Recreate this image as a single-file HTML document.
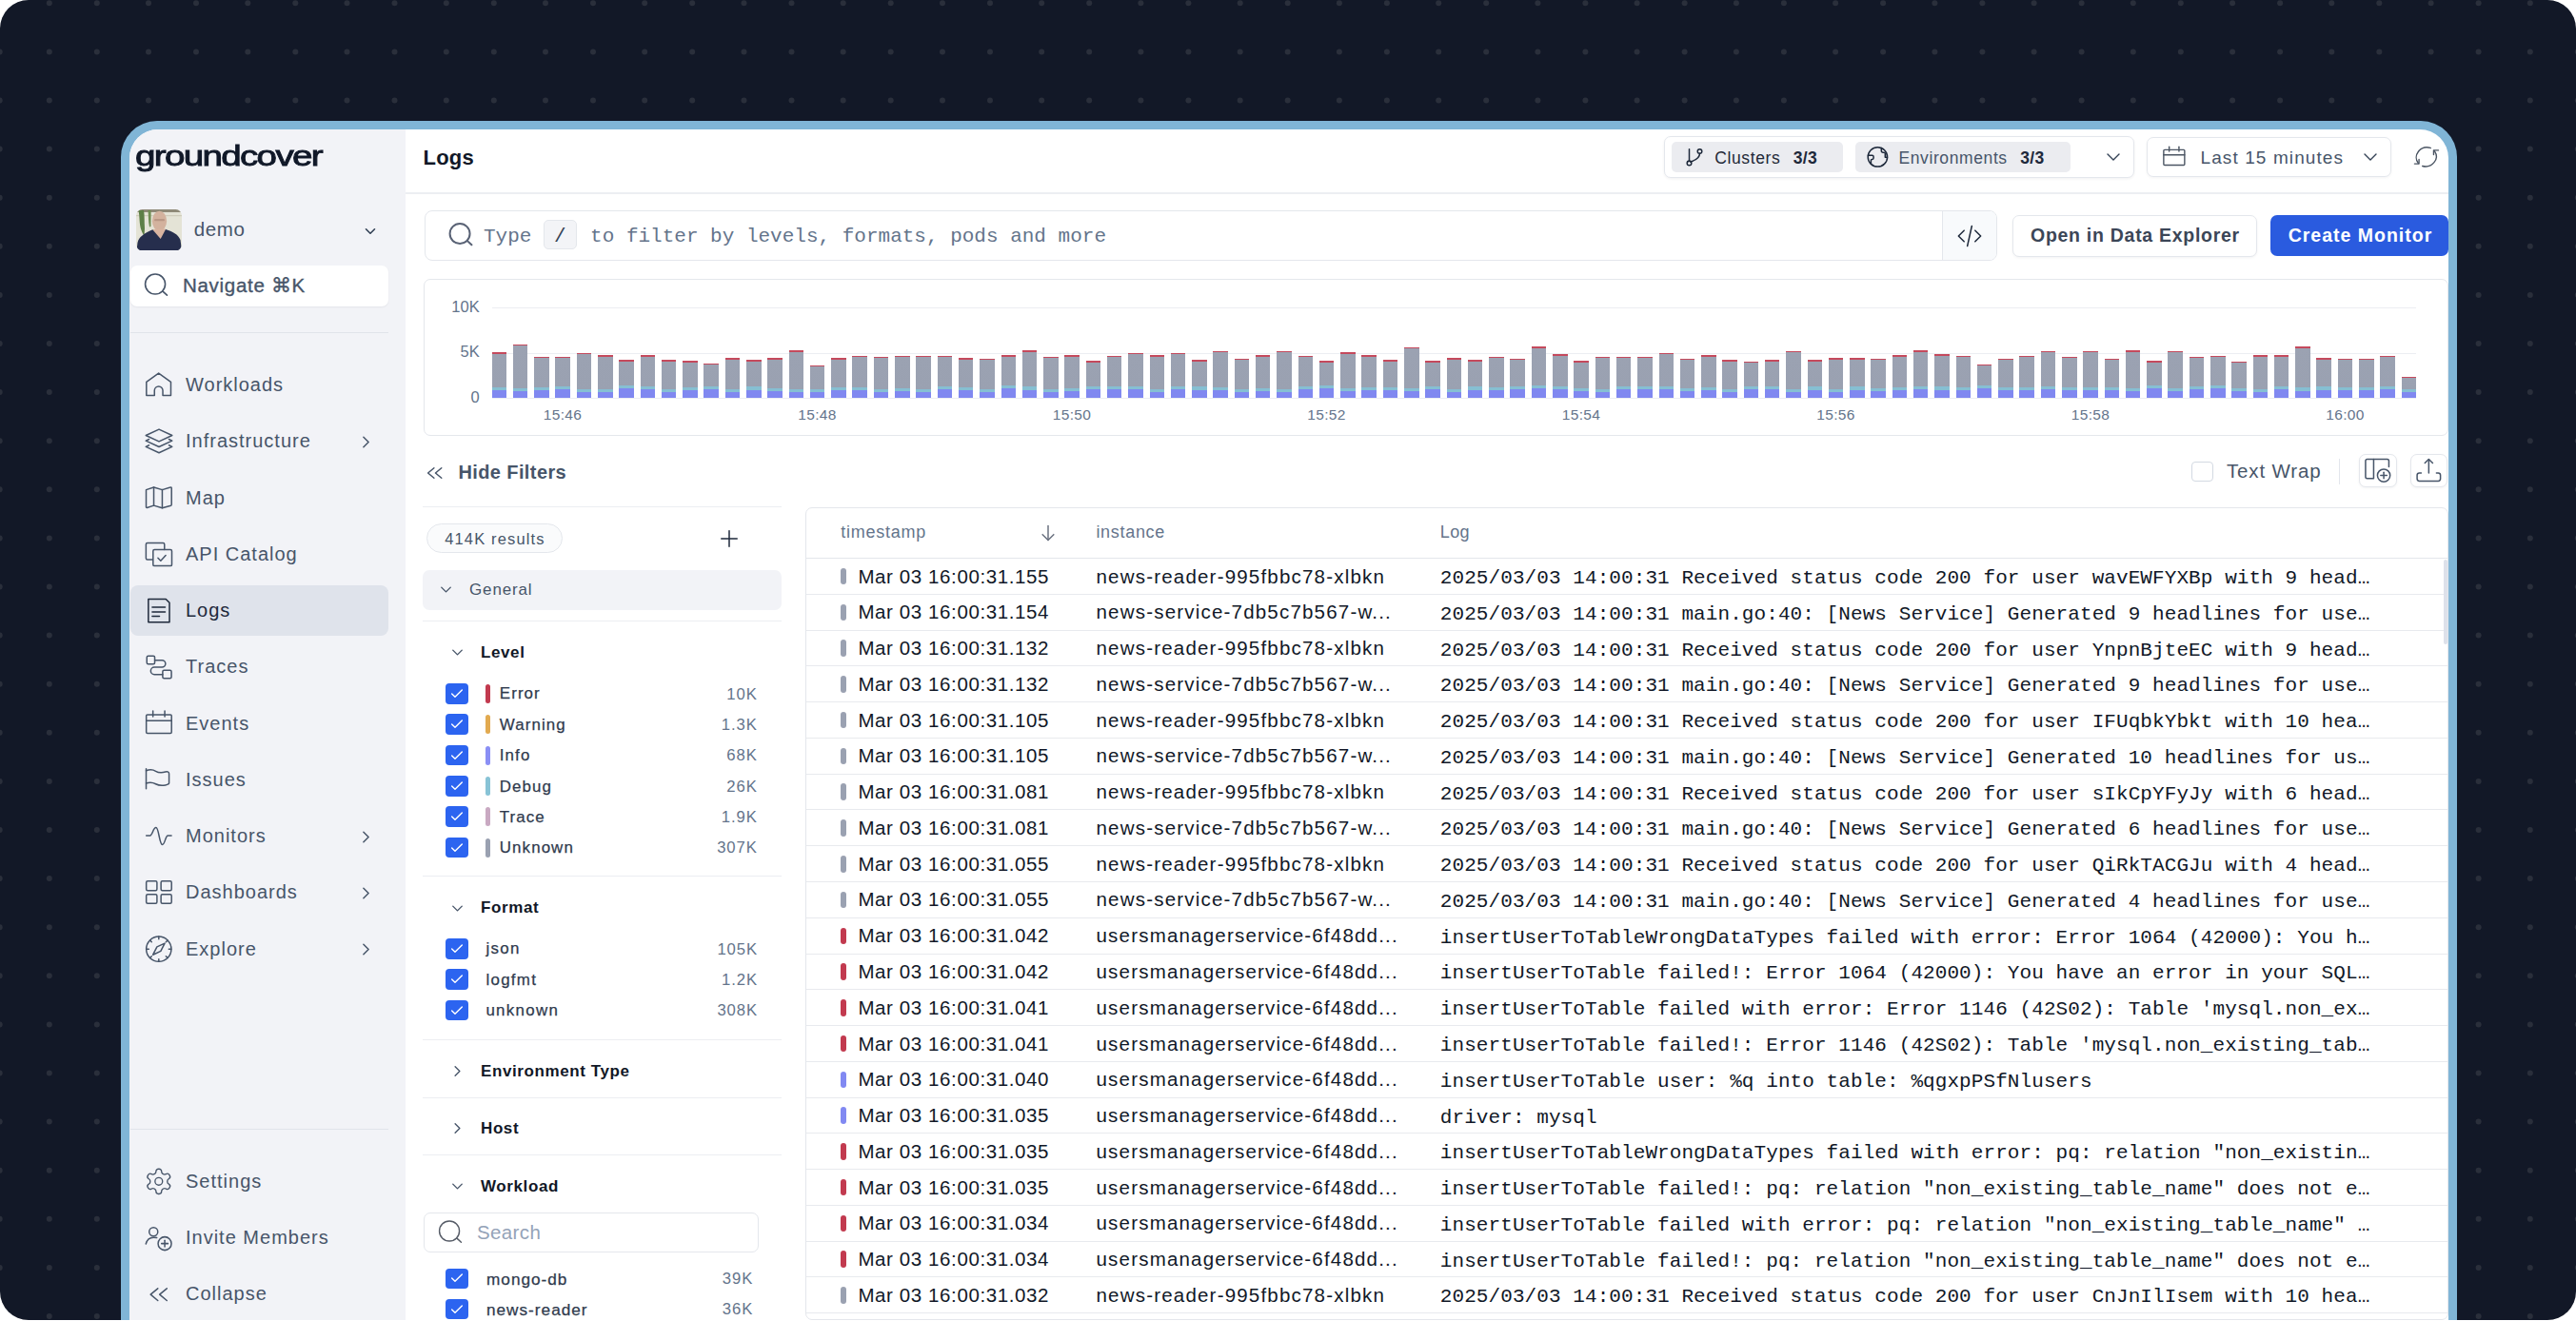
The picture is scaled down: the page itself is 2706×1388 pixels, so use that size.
<!DOCTYPE html><html><head><meta charset="utf-8"><style>
html,body{margin:0;padding:0;}
body{width:2706px;height:1388px;overflow:hidden;background:#ffffff;position:relative;font-family:"Liberation Sans",sans-serif;}
.t{position:absolute;white-space:nowrap;line-height:1;}
.r{position:absolute;box-sizing:border-box;}
.bg{position:absolute;left:0;top:0;width:2706px;height:1387px;border-radius:30px;background:#121827;overflow:hidden;}
.frame{position:absolute;left:127px;top:127px;width:2454px;height:1260px;background:#80b5d6;border-radius:38px 38px 0 0;}
.app{position:absolute;left:136px;top:136px;width:2436px;height:1251px;background:#ffffff;border-radius:30px 30px 0 0;overflow:hidden;}
.abs{position:absolute;left:-136px;top:-136px;width:2706px;height:1388px;}
</style></head><body>
<domain hidden>Computer-Use</domain>
<div class="bg">
<svg width="2706" height="1387" style="position:absolute;left:0;top:0" fill="#2a2f3b"><circle cx="-0.3" cy="3.3" r="3"/><circle cx="51.8" cy="3.3" r="3"/><circle cx="101.8" cy="3.3" r="3"/><circle cx="156.0" cy="3.3" r="3"/><circle cx="206.0" cy="3.3" r="3"/><circle cx="260.3" cy="3.3" r="3"/><circle cx="310.3" cy="3.3" r="3"/><circle cx="364.5" cy="3.3" r="3"/><circle cx="414.5" cy="3.3" r="3"/><circle cx="468.8" cy="3.3" r="3"/><circle cx="518.8" cy="3.3" r="3"/><circle cx="573.0" cy="3.3" r="3"/><circle cx="623.0" cy="3.3" r="3"/><circle cx="677.2" cy="3.3" r="3"/><circle cx="727.2" cy="3.3" r="3"/><circle cx="781.5" cy="3.3" r="3"/><circle cx="831.5" cy="3.3" r="3"/><circle cx="885.7" cy="3.3" r="3"/><circle cx="935.7" cy="3.3" r="3"/><circle cx="990.0" cy="3.3" r="3"/><circle cx="1040.0" cy="3.3" r="3"/><circle cx="1094.2" cy="3.3" r="3"/><circle cx="1144.2" cy="3.3" r="3"/><circle cx="1198.4" cy="3.3" r="3"/><circle cx="1248.4" cy="3.3" r="3"/><circle cx="1302.7" cy="3.3" r="3"/><circle cx="1352.7" cy="3.3" r="3"/><circle cx="1406.9" cy="3.3" r="3"/><circle cx="1456.9" cy="3.3" r="3"/><circle cx="1511.2" cy="3.3" r="3"/><circle cx="1561.2" cy="3.3" r="3"/><circle cx="1615.4" cy="3.3" r="3"/><circle cx="1665.4" cy="3.3" r="3"/><circle cx="1719.6" cy="3.3" r="3"/><circle cx="1769.6" cy="3.3" r="3"/><circle cx="1823.9" cy="3.3" r="3"/><circle cx="1873.9" cy="3.3" r="3"/><circle cx="1928.1" cy="3.3" r="3"/><circle cx="1978.1" cy="3.3" r="3"/><circle cx="2032.4" cy="3.3" r="3"/><circle cx="2082.4" cy="3.3" r="3"/><circle cx="2136.6" cy="3.3" r="3"/><circle cx="2186.6" cy="3.3" r="3"/><circle cx="2240.8" cy="3.3" r="3"/><circle cx="2290.8" cy="3.3" r="3"/><circle cx="2345.1" cy="3.3" r="3"/><circle cx="2395.1" cy="3.3" r="3"/><circle cx="2449.3" cy="3.3" r="3"/><circle cx="2499.3" cy="3.3" r="3"/><circle cx="2553.6" cy="3.3" r="3"/><circle cx="2603.6" cy="3.3" r="3"/><circle cx="2657.8" cy="3.3" r="3"/><circle cx="2707.8" cy="3.3" r="3"/><circle cx="-0.3" cy="54.4" r="3"/><circle cx="51.8" cy="54.4" r="3"/><circle cx="101.8" cy="54.4" r="3"/><circle cx="156.0" cy="54.4" r="3"/><circle cx="206.0" cy="54.4" r="3"/><circle cx="260.3" cy="54.4" r="3"/><circle cx="310.3" cy="54.4" r="3"/><circle cx="364.5" cy="54.4" r="3"/><circle cx="414.5" cy="54.4" r="3"/><circle cx="468.8" cy="54.4" r="3"/><circle cx="518.8" cy="54.4" r="3"/><circle cx="573.0" cy="54.4" r="3"/><circle cx="623.0" cy="54.4" r="3"/><circle cx="677.2" cy="54.4" r="3"/><circle cx="727.2" cy="54.4" r="3"/><circle cx="781.5" cy="54.4" r="3"/><circle cx="831.5" cy="54.4" r="3"/><circle cx="885.7" cy="54.4" r="3"/><circle cx="935.7" cy="54.4" r="3"/><circle cx="990.0" cy="54.4" r="3"/><circle cx="1040.0" cy="54.4" r="3"/><circle cx="1094.2" cy="54.4" r="3"/><circle cx="1144.2" cy="54.4" r="3"/><circle cx="1198.4" cy="54.4" r="3"/><circle cx="1248.4" cy="54.4" r="3"/><circle cx="1302.7" cy="54.4" r="3"/><circle cx="1352.7" cy="54.4" r="3"/><circle cx="1406.9" cy="54.4" r="3"/><circle cx="1456.9" cy="54.4" r="3"/><circle cx="1511.2" cy="54.4" r="3"/><circle cx="1561.2" cy="54.4" r="3"/><circle cx="1615.4" cy="54.4" r="3"/><circle cx="1665.4" cy="54.4" r="3"/><circle cx="1719.6" cy="54.4" r="3"/><circle cx="1769.6" cy="54.4" r="3"/><circle cx="1823.9" cy="54.4" r="3"/><circle cx="1873.9" cy="54.4" r="3"/><circle cx="1928.1" cy="54.4" r="3"/><circle cx="1978.1" cy="54.4" r="3"/><circle cx="2032.4" cy="54.4" r="3"/><circle cx="2082.4" cy="54.4" r="3"/><circle cx="2136.6" cy="54.4" r="3"/><circle cx="2186.6" cy="54.4" r="3"/><circle cx="2240.8" cy="54.4" r="3"/><circle cx="2290.8" cy="54.4" r="3"/><circle cx="2345.1" cy="54.4" r="3"/><circle cx="2395.1" cy="54.4" r="3"/><circle cx="2449.3" cy="54.4" r="3"/><circle cx="2499.3" cy="54.4" r="3"/><circle cx="2553.6" cy="54.4" r="3"/><circle cx="2603.6" cy="54.4" r="3"/><circle cx="2657.8" cy="54.4" r="3"/><circle cx="2707.8" cy="54.4" r="3"/><circle cx="-0.3" cy="105.5" r="3"/><circle cx="51.8" cy="105.5" r="3"/><circle cx="101.8" cy="105.5" r="3"/><circle cx="156.0" cy="105.5" r="3"/><circle cx="206.0" cy="105.5" r="3"/><circle cx="260.3" cy="105.5" r="3"/><circle cx="310.3" cy="105.5" r="3"/><circle cx="364.5" cy="105.5" r="3"/><circle cx="414.5" cy="105.5" r="3"/><circle cx="468.8" cy="105.5" r="3"/><circle cx="518.8" cy="105.5" r="3"/><circle cx="573.0" cy="105.5" r="3"/><circle cx="623.0" cy="105.5" r="3"/><circle cx="677.2" cy="105.5" r="3"/><circle cx="727.2" cy="105.5" r="3"/><circle cx="781.5" cy="105.5" r="3"/><circle cx="831.5" cy="105.5" r="3"/><circle cx="885.7" cy="105.5" r="3"/><circle cx="935.7" cy="105.5" r="3"/><circle cx="990.0" cy="105.5" r="3"/><circle cx="1040.0" cy="105.5" r="3"/><circle cx="1094.2" cy="105.5" r="3"/><circle cx="1144.2" cy="105.5" r="3"/><circle cx="1198.4" cy="105.5" r="3"/><circle cx="1248.4" cy="105.5" r="3"/><circle cx="1302.7" cy="105.5" r="3"/><circle cx="1352.7" cy="105.5" r="3"/><circle cx="1406.9" cy="105.5" r="3"/><circle cx="1456.9" cy="105.5" r="3"/><circle cx="1511.2" cy="105.5" r="3"/><circle cx="1561.2" cy="105.5" r="3"/><circle cx="1615.4" cy="105.5" r="3"/><circle cx="1665.4" cy="105.5" r="3"/><circle cx="1719.6" cy="105.5" r="3"/><circle cx="1769.6" cy="105.5" r="3"/><circle cx="1823.9" cy="105.5" r="3"/><circle cx="1873.9" cy="105.5" r="3"/><circle cx="1928.1" cy="105.5" r="3"/><circle cx="1978.1" cy="105.5" r="3"/><circle cx="2032.4" cy="105.5" r="3"/><circle cx="2082.4" cy="105.5" r="3"/><circle cx="2136.6" cy="105.5" r="3"/><circle cx="2186.6" cy="105.5" r="3"/><circle cx="2240.8" cy="105.5" r="3"/><circle cx="2290.8" cy="105.5" r="3"/><circle cx="2345.1" cy="105.5" r="3"/><circle cx="2395.1" cy="105.5" r="3"/><circle cx="2449.3" cy="105.5" r="3"/><circle cx="2499.3" cy="105.5" r="3"/><circle cx="2553.6" cy="105.5" r="3"/><circle cx="2603.6" cy="105.5" r="3"/><circle cx="2657.8" cy="105.5" r="3"/><circle cx="2707.8" cy="105.5" r="3"/><circle cx="-0.3" cy="156.6" r="3"/><circle cx="51.8" cy="156.6" r="3"/><circle cx="101.8" cy="156.6" r="3"/><circle cx="2603.6" cy="156.6" r="3"/><circle cx="2657.8" cy="156.6" r="3"/><circle cx="2707.8" cy="156.6" r="3"/><circle cx="-0.3" cy="207.7" r="3"/><circle cx="51.8" cy="207.7" r="3"/><circle cx="101.8" cy="207.7" r="3"/><circle cx="2603.6" cy="207.7" r="3"/><circle cx="2657.8" cy="207.7" r="3"/><circle cx="2707.8" cy="207.7" r="3"/><circle cx="-0.3" cy="258.8" r="3"/><circle cx="51.8" cy="258.8" r="3"/><circle cx="101.8" cy="258.8" r="3"/><circle cx="2603.6" cy="258.8" r="3"/><circle cx="2657.8" cy="258.8" r="3"/><circle cx="2707.8" cy="258.8" r="3"/><circle cx="-0.3" cy="309.9" r="3"/><circle cx="51.8" cy="309.9" r="3"/><circle cx="101.8" cy="309.9" r="3"/><circle cx="2603.6" cy="309.9" r="3"/><circle cx="2657.8" cy="309.9" r="3"/><circle cx="2707.8" cy="309.9" r="3"/><circle cx="-0.3" cy="361.0" r="3"/><circle cx="51.8" cy="361.0" r="3"/><circle cx="101.8" cy="361.0" r="3"/><circle cx="2603.6" cy="361.0" r="3"/><circle cx="2657.8" cy="361.0" r="3"/><circle cx="2707.8" cy="361.0" r="3"/><circle cx="-0.3" cy="412.1" r="3"/><circle cx="51.8" cy="412.1" r="3"/><circle cx="101.8" cy="412.1" r="3"/><circle cx="2603.6" cy="412.1" r="3"/><circle cx="2657.8" cy="412.1" r="3"/><circle cx="2707.8" cy="412.1" r="3"/><circle cx="-0.3" cy="463.2" r="3"/><circle cx="51.8" cy="463.2" r="3"/><circle cx="101.8" cy="463.2" r="3"/><circle cx="2603.6" cy="463.2" r="3"/><circle cx="2657.8" cy="463.2" r="3"/><circle cx="2707.8" cy="463.2" r="3"/><circle cx="-0.3" cy="514.3" r="3"/><circle cx="51.8" cy="514.3" r="3"/><circle cx="101.8" cy="514.3" r="3"/><circle cx="2603.6" cy="514.3" r="3"/><circle cx="2657.8" cy="514.3" r="3"/><circle cx="2707.8" cy="514.3" r="3"/><circle cx="-0.3" cy="565.4" r="3"/><circle cx="51.8" cy="565.4" r="3"/><circle cx="101.8" cy="565.4" r="3"/><circle cx="2603.6" cy="565.4" r="3"/><circle cx="2657.8" cy="565.4" r="3"/><circle cx="2707.8" cy="565.4" r="3"/><circle cx="-0.3" cy="616.5" r="3"/><circle cx="51.8" cy="616.5" r="3"/><circle cx="101.8" cy="616.5" r="3"/><circle cx="2603.6" cy="616.5" r="3"/><circle cx="2657.8" cy="616.5" r="3"/><circle cx="2707.8" cy="616.5" r="3"/><circle cx="-0.3" cy="667.6" r="3"/><circle cx="51.8" cy="667.6" r="3"/><circle cx="101.8" cy="667.6" r="3"/><circle cx="2603.6" cy="667.6" r="3"/><circle cx="2657.8" cy="667.6" r="3"/><circle cx="2707.8" cy="667.6" r="3"/><circle cx="-0.3" cy="718.7" r="3"/><circle cx="51.8" cy="718.7" r="3"/><circle cx="101.8" cy="718.7" r="3"/><circle cx="2603.6" cy="718.7" r="3"/><circle cx="2657.8" cy="718.7" r="3"/><circle cx="2707.8" cy="718.7" r="3"/><circle cx="-0.3" cy="769.8" r="3"/><circle cx="51.8" cy="769.8" r="3"/><circle cx="101.8" cy="769.8" r="3"/><circle cx="2603.6" cy="769.8" r="3"/><circle cx="2657.8" cy="769.8" r="3"/><circle cx="2707.8" cy="769.8" r="3"/><circle cx="-0.3" cy="820.9" r="3"/><circle cx="51.8" cy="820.9" r="3"/><circle cx="101.8" cy="820.9" r="3"/><circle cx="2603.6" cy="820.9" r="3"/><circle cx="2657.8" cy="820.9" r="3"/><circle cx="2707.8" cy="820.9" r="3"/><circle cx="-0.3" cy="872.0" r="3"/><circle cx="51.8" cy="872.0" r="3"/><circle cx="101.8" cy="872.0" r="3"/><circle cx="2603.6" cy="872.0" r="3"/><circle cx="2657.8" cy="872.0" r="3"/><circle cx="2707.8" cy="872.0" r="3"/><circle cx="-0.3" cy="923.1" r="3"/><circle cx="51.8" cy="923.1" r="3"/><circle cx="101.8" cy="923.1" r="3"/><circle cx="2603.6" cy="923.1" r="3"/><circle cx="2657.8" cy="923.1" r="3"/><circle cx="2707.8" cy="923.1" r="3"/><circle cx="-0.3" cy="974.2" r="3"/><circle cx="51.8" cy="974.2" r="3"/><circle cx="101.8" cy="974.2" r="3"/><circle cx="2603.6" cy="974.2" r="3"/><circle cx="2657.8" cy="974.2" r="3"/><circle cx="2707.8" cy="974.2" r="3"/><circle cx="-0.3" cy="1025.3" r="3"/><circle cx="51.8" cy="1025.3" r="3"/><circle cx="101.8" cy="1025.3" r="3"/><circle cx="2603.6" cy="1025.3" r="3"/><circle cx="2657.8" cy="1025.3" r="3"/><circle cx="2707.8" cy="1025.3" r="3"/><circle cx="-0.3" cy="1076.4" r="3"/><circle cx="51.8" cy="1076.4" r="3"/><circle cx="101.8" cy="1076.4" r="3"/><circle cx="2603.6" cy="1076.4" r="3"/><circle cx="2657.8" cy="1076.4" r="3"/><circle cx="2707.8" cy="1076.4" r="3"/><circle cx="-0.3" cy="1127.5" r="3"/><circle cx="51.8" cy="1127.5" r="3"/><circle cx="101.8" cy="1127.5" r="3"/><circle cx="2603.6" cy="1127.5" r="3"/><circle cx="2657.8" cy="1127.5" r="3"/><circle cx="2707.8" cy="1127.5" r="3"/><circle cx="-0.3" cy="1178.6" r="3"/><circle cx="51.8" cy="1178.6" r="3"/><circle cx="101.8" cy="1178.6" r="3"/><circle cx="2603.6" cy="1178.6" r="3"/><circle cx="2657.8" cy="1178.6" r="3"/><circle cx="2707.8" cy="1178.6" r="3"/><circle cx="-0.3" cy="1229.7" r="3"/><circle cx="51.8" cy="1229.7" r="3"/><circle cx="101.8" cy="1229.7" r="3"/><circle cx="2603.6" cy="1229.7" r="3"/><circle cx="2657.8" cy="1229.7" r="3"/><circle cx="2707.8" cy="1229.7" r="3"/><circle cx="-0.3" cy="1280.8" r="3"/><circle cx="51.8" cy="1280.8" r="3"/><circle cx="101.8" cy="1280.8" r="3"/><circle cx="2603.6" cy="1280.8" r="3"/><circle cx="2657.8" cy="1280.8" r="3"/><circle cx="2707.8" cy="1280.8" r="3"/><circle cx="-0.3" cy="1331.9" r="3"/><circle cx="51.8" cy="1331.9" r="3"/><circle cx="101.8" cy="1331.9" r="3"/><circle cx="2603.6" cy="1331.9" r="3"/><circle cx="2657.8" cy="1331.9" r="3"/><circle cx="2707.8" cy="1331.9" r="3"/><circle cx="-0.3" cy="1383.0" r="3"/><circle cx="51.8" cy="1383.0" r="3"/><circle cx="101.8" cy="1383.0" r="3"/><circle cx="2603.6" cy="1383.0" r="3"/><circle cx="2657.8" cy="1383.0" r="3"/><circle cx="2707.8" cy="1383.0" r="3"/></svg>
</div>
<div class="frame"></div>
<div class="app"><div class="abs">
<div class="r" style="left:136.0px;top:136.0px;width:290.0px;height:1252.0px;background:#f2f3f7;"></div>
<div class="t" style="left:141.5px;top:148.5px;font-size:30px;color:#101828;font-weight:normal;font-family:'Liberation Sans', sans-serif;letter-spacing:-1.3px;transform:scaleX(1.285);transform-origin:0 0;-webkit-text-stroke:0.9px #101828;">groundcover</div>
<svg class="r" style="left:143px;top:219.5px;" width="48" height="43.5" viewBox="0 0 48 43.5">
<defs><clipPath id="avc"><rect x="0" y="0" width="48" height="43.5" rx="6.5"/></clipPath><filter id="avb"><feGaussianBlur stdDeviation="0.7"/></filter></defs>
<g clip-path="url(#avc)"><rect width="48" height="43.5" fill="#e4e3d6"/>
<g filter="url(#avb)">
<rect x="0" y="0" width="48" height="3" fill="#8f8a78"/>
<rect x="0" y="6" width="48" height="1.2" fill="#cfccbb"/>
<path d="M2.5 1 C4 8 3 15 5.5 22 C6.5 25 8 27 8.5 28 L9 20 C8.5 12 9 6 8 1 Z" fill="#5d7f46"/>
<path d="M12.5 1 C13 7 12.8 13 14 18.5 L15.5 18 C15.5 11 15.8 6 15.5 1 Z" fill="#6f8e55"/>
<ellipse cx="24.5" cy="12.3" rx="7.6" ry="10.6" fill="#d3b29e"/><rect x="19" y="10" width="11" height="2.2" rx="1" fill="#a88675" opacity="0.6"/>
<path d="M17 21 L25.7 32.5 L31.5 20.5 Z" fill="#d8b3a0"/>
<path d="M0.5 43.5 L1.5 35 C3 29 8 25.5 17.3 21.3 L25.7 31 L31 20.9 C39 23.5 44.5 26.5 46.5 32 L48 43.5 Z" fill="#262f4d"/>
</g></g></svg>
<div class="t" style="left:203.8px;top:230.9px;font-size:20.5px;color:#475569;font-weight:normal;font-family:'Liberation Sans', sans-serif;letter-spacing:0.6px;">demo</div>
<svg class="r" style="left:379.7px;top:233.8px;" width="18" height="18" viewBox="0 0 24 24" fill="none" stroke="#334155" stroke-width="2.13" stroke-linecap="round" stroke-linejoin="round"><path d="m6 9 6 6 6-6"/></svg>
<div class="r" style="left:137.0px;top:279.0px;width:271.3px;height:43.0px;background:#ffffff;border-radius:7px;box-shadow:0 1px 2px rgba(16,24,40,0.06);"></div>
<svg class="r" style="left:150.1px;top:284.8px;" width="28" height="28" viewBox="0 0 24 24" fill="none" stroke="#475569" stroke-width="1.37" stroke-linecap="round" stroke-linejoin="round"><circle cx="11.2" cy="11.6" r="9"/><path d="m18 18.1 3.8 3.5"/></svg>
<div class="t" style="left:192.0px;top:290.1px;font-size:20.5px;color:#475569;font-weight:normal;font-family:'Liberation Sans', sans-serif;letter-spacing:0.7px;-webkit-text-stroke:0.35px #475569;">Navigate &#8984;K</div>
<div class="r" style="left:137.0px;top:349.0px;width:270.7px;height:1.3px;background:#e1e4ea;"></div>
<svg class="r" style="left:149.0px;top:386.7px;" width="35" height="35" viewBox="0 0 24 24" fill="none" stroke="#475569" stroke-width="1.03" stroke-linecap="round" stroke-linejoin="round"><path d="M3.3 19.6V9.8L12.1 3.5l8.8 6.3v9.8H15.1V16a3 3 0 0 0-6 0v3.6z"/></svg>
<div class="t" style="left:195.0px;top:394.0px;font-size:20px;color:#475569;font-weight:normal;font-family:'Liberation Sans', sans-serif;letter-spacing:1.0px;">Workloads</div>
<svg class="r" style="left:149.0px;top:446.0px;" width="35" height="35" viewBox="0 0 24 24" fill="none" stroke="#475569" stroke-width="1.03" stroke-linecap="round" stroke-linejoin="round"><path d="M12.35 3.5 21.8 7.9 12.35 12.3 2.9 7.9z"/><path d="M5.2 10.6 2.9 11.7l9.45 4.4 9.45-4.4-2.3-1.1"/><path d="M5.2 14.9 2.9 16l9.45 4.4L21.8 16l-2.3-1.1"/></svg>
<div class="t" style="left:195.0px;top:453.3px;font-size:20px;color:#475569;font-weight:normal;font-family:'Liberation Sans', sans-serif;letter-spacing:1.0px;">Infrastructure</div>
<svg class="r" style="left:373.5px;top:453.8px;" width="21" height="21" viewBox="0 0 24 24" fill="none" stroke="#475569" stroke-width="1.71" stroke-linecap="round" stroke-linejoin="round"><path d="m9 18 6-6-6-6"/></svg>
<svg class="r" style="left:149.0px;top:505.2px;" width="35" height="35" viewBox="0 0 24 24" fill="none" stroke="#475569" stroke-width="1.03" stroke-linecap="round" stroke-linejoin="round"><path d="M3.1 6.6 8.6 4.8l6.1 1.8 5.9-1.8a.6.6 0 0 1 .8.6V17.3a.8.8 0 0 1-.5.7L14.7 19.7 8.6 17.9 3.7 19.5a.5.5 0 0 1-.6-.5z"/><path d="M8.6 4.8v13.1"/><path d="M14.7 6.6v13.1"/></svg>
<div class="t" style="left:195.0px;top:512.5px;font-size:20px;color:#475569;font-weight:normal;font-family:'Liberation Sans', sans-serif;letter-spacing:1.0px;">Map</div>
<svg class="r" style="left:149.0px;top:564.5px;" width="35" height="35" viewBox="0 0 24 24" fill="none" stroke="#475569" stroke-width="1.03" stroke-linecap="round" stroke-linejoin="round"><path d="M7.8 15.8H4a1 1 0 0 1-1-1V4.8a1 1 0 0 1 1-1h11.3a1 1 0 0 1 1 1v3.8"/><rect x="8.1" y="8.6" width="13.5" height="11.7" rx="1"/><path d="m11.6 14.6 2 2 3.6-3.9"/></svg>
<div class="t" style="left:195.0px;top:571.8px;font-size:20px;color:#475569;font-weight:normal;font-family:'Liberation Sans', sans-serif;letter-spacing:1.0px;">API Catalog</div>
<div class="r" style="left:136.8px;top:614.8px;width:270.9px;height:53.2px;background:#dfe3eb;border-radius:8px;"></div>
<svg class="r" style="left:149.0px;top:623.8px;" width="35" height="35" viewBox="0 0 24 24" fill="none" stroke="#1e293b" stroke-width="1.03" stroke-linecap="round" stroke-linejoin="round"><path d="M4.7 3.8h12.6l2.6 2.6v14H4.7z"/><path d="M7.5 9.6h9.3"/><path d="M7.5 13h9.3"/><path d="M7.5 16.1h5.2"/></svg>
<div class="t" style="left:195.0px;top:631.1px;font-size:20px;color:#1e293b;font-weight:normal;font-family:'Liberation Sans', sans-serif;letter-spacing:1.0px;">Logs</div>
<svg class="r" style="left:149.0px;top:683.1px;" width="35" height="35" viewBox="0 0 24 24" fill="none" stroke="#475569" stroke-width="1.03" stroke-linecap="round" stroke-linejoin="round"><rect x="3.6" y="4.3" width="5.7" height="5.8" rx="1"/><rect x="15" y="14.6" width="6.3" height="5.8" rx="1"/><path d="M9.3 7.3h5.2a2.55 2.55 0 0 1 0 5.1H9a2.6 2.6 0 0 0 0 5.2h6"/></svg>
<div class="t" style="left:195.0px;top:690.4px;font-size:20px;color:#475569;font-weight:normal;font-family:'Liberation Sans', sans-serif;letter-spacing:1.0px;">Traces</div>
<svg class="r" style="left:149.0px;top:742.3px;" width="35" height="35" viewBox="0 0 24 24" fill="none" stroke="#475569" stroke-width="1.03" stroke-linecap="round" stroke-linejoin="round"><rect x="3.2" y="6.1" width="18.2" height="13.4" rx="0.8"/><path d="M3.2 10.5h18.2"/><path d="M8 3.5v4"/><path d="M16.5 3.5v4"/></svg>
<div class="t" style="left:195.0px;top:749.6px;font-size:20px;color:#475569;font-weight:normal;font-family:'Liberation Sans', sans-serif;letter-spacing:1.0px;">Events</div>
<svg class="r" style="left:149.0px;top:801.6px;" width="35" height="35" viewBox="0 0 24 24" fill="none" stroke="#475569" stroke-width="1.03" stroke-linecap="round" stroke-linejoin="round"><path d="M3.1 18.3V4"/><path d="M3.1 5.3C6 4.3 8 4.5 10 5.7s4 1.3 7 .5q2.6-.6 2.6 1.3v6.8q0 .9-2.6 1.4c-3 .6-5 .3-7-.8s-4-1.5-6.9-.5"/></svg>
<div class="t" style="left:195.0px;top:808.9px;font-size:20px;color:#475569;font-weight:normal;font-family:'Liberation Sans', sans-serif;letter-spacing:1.0px;">Issues</div>
<svg class="r" style="left:149.0px;top:860.9px;" width="35" height="35" viewBox="0 0 24 24" fill="none" stroke="#475569" stroke-width="1.03" stroke-linecap="round" stroke-linejoin="round"><path d="M3.2 11.6H6c1.5 0 2.2-5.7 4.2-5.7s2.5 12.2 4.5 12.2 2.3-6.5 4-6.5h2.6"/></svg>
<div class="t" style="left:195.0px;top:868.2px;font-size:20px;color:#475569;font-weight:normal;font-family:'Liberation Sans', sans-serif;letter-spacing:1.0px;">Monitors</div>
<svg class="r" style="left:373.5px;top:868.7px;" width="21" height="21" viewBox="0 0 24 24" fill="none" stroke="#475569" stroke-width="1.71" stroke-linecap="round" stroke-linejoin="round"><path d="m9 18 6-6-6-6"/></svg>
<svg class="r" style="left:149.0px;top:920.1px;" width="35" height="35" viewBox="0 0 24 24" fill="none" stroke="#475569" stroke-width="1.03" stroke-linecap="round" stroke-linejoin="round"><rect x="3.2" y="3.9" width="7.7" height="6.9" rx="1"/><rect x="13.8" y="3.9" width="7.6" height="6.9" rx="1"/><rect x="3.2" y="13.5" width="7.7" height="6.6" rx="1"/><rect x="13.8" y="13.5" width="7.6" height="6.6" rx="1"/></svg>
<div class="t" style="left:195.0px;top:927.4px;font-size:20px;color:#475569;font-weight:normal;font-family:'Liberation Sans', sans-serif;letter-spacing:1.0px;">Dashboards</div>
<svg class="r" style="left:373.5px;top:927.9px;" width="21" height="21" viewBox="0 0 24 24" fill="none" stroke="#475569" stroke-width="1.71" stroke-linecap="round" stroke-linejoin="round"><path d="m9 18 6-6-6-6"/></svg>
<svg class="r" style="left:149.0px;top:979.4px;" width="35" height="35" viewBox="0 0 24 24" fill="none" stroke="#475569" stroke-width="1.03" stroke-linecap="round" stroke-linejoin="round"><circle cx="12.2" cy="12.5" r="9"/><path d="M12.2 3.5v1.8"/><path d="M12.2 19.7v1.8"/><path d="M3.2 12.5H5"/><path d="M19.4 12.5h1.8"/><path d="m18.56 6.14-1.2 1.2"/><path d="m5.84 6.14 1.2 1.2"/><path d="m5.84 18.86 1.2-1.2"/><path d="m18.56 18.86-1.2-1.2"/><path d="M16.5 8.3 13.6 14 8 16.6l2.9-5.7z"/></svg>
<div class="t" style="left:195.0px;top:986.7px;font-size:20px;color:#475569;font-weight:normal;font-family:'Liberation Sans', sans-serif;letter-spacing:1.0px;">Explore</div>
<svg class="r" style="left:373.5px;top:987.2px;" width="21" height="21" viewBox="0 0 24 24" fill="none" stroke="#475569" stroke-width="1.71" stroke-linecap="round" stroke-linejoin="round"><path d="m9 18 6-6-6-6"/></svg>
<div class="r" style="left:137.0px;top:1186.0px;width:270.5px;height:1.3px;background:#e1e4ea;"></div>
<svg class="r" style="left:149.0px;top:1223.9px;" width="35" height="35" viewBox="0 0 24 24" fill="none" stroke="#475569" stroke-width="1.03" stroke-linecap="round" stroke-linejoin="round"><g transform="translate(12.2 11.9) scale(0.9) translate(-12 -12)"><path d="M12.22 2h-.44a2 2 0 0 0-2 2v.18a2 2 0 0 1-1 1.73l-.43.25a2 2 0 0 1-2 0l-.15-.08a2 2 0 0 0-2.73.73l-.22.38a2 2 0 0 0 .73 2.73l.15.1a2 2 0 0 1 1 1.72v.51a2 2 0 0 1-1 1.74l-.15.09a2 2 0 0 0-.73 2.73l.22.38a2 2 0 0 0 2.73.73l.15-.08a2 2 0 0 1 2 0l.43.25a2 2 0 0 1 1 1.73V20a2 2 0 0 0 2 2h.44a2 2 0 0 0 2-2v-.18a2 2 0 0 1 1-1.73l.43-.25a2 2 0 0 1 2 0l.15.08a2 2 0 0 0 2.73-.73l.22-.39a2 2 0 0 0-.73-2.73l-.15-.08a2 2 0 0 1-1-1.74v-.5a2 2 0 0 1 1-1.74l.15-.09a2 2 0 0 0 .73-2.73l-.22-.38a2 2 0 0 0-2.73-.73l-.15.08a2 2 0 0 1-2 0l-.43-.25a2 2 0 0 1-1-1.73V4a2 2 0 0 0-2-2z"/><circle cx="12" cy="12" r="3"/></g></svg>
<div class="t" style="left:195.0px;top:1231.2px;font-size:20px;color:#475569;font-weight:normal;font-family:'Liberation Sans', sans-serif;letter-spacing:1.0px;">Settings</div>
<svg class="r" style="left:149.0px;top:1282.7px;" width="35" height="35" viewBox="0 0 24 24" fill="none" stroke="#475569" stroke-width="1.03" stroke-linecap="round" stroke-linejoin="round"><circle cx="8.4" cy="7.75" r="3.1"/><path d="M2.9 16.5c.8-3 3-4.7 5.5-4.7 1 0 1.7.1 2.4.2"/><circle cx="16.5" cy="16.2" r="4.8"/><path d="M16.5 13.9v4.6"/><path d="M14.2 16.2h4.6"/></svg>
<div class="t" style="left:195.0px;top:1290.0px;font-size:20px;color:#475569;font-weight:normal;font-family:'Liberation Sans', sans-serif;letter-spacing:1.0px;">Invite Members</div>
<svg class="r" style="left:149.0px;top:1341.6px;" width="35" height="35" viewBox="0 0 24 24" fill="none" stroke="#475569" stroke-width="1.03" stroke-linecap="round" stroke-linejoin="round"><path d="m11.5 8.1-5.2 4.35 5.2 4.35"/><path d="m18 8.1-5.2 4.35L18 16.8"/></svg>
<div class="t" style="left:195.0px;top:1348.9px;font-size:20px;color:#475569;font-weight:normal;font-family:'Liberation Sans', sans-serif;letter-spacing:1.0px;">Collapse</div>
<div class="t" style="left:444.5px;top:155.0px;font-size:22px;color:#111827;font-weight:bold;font-family:'Liberation Sans', sans-serif;letter-spacing:0.2px;">Logs</div>
<div class="r" style="left:426.0px;top:202.0px;width:2146.0px;height:2.0px;background:#eceef2;"></div>
<div class="r" style="left:1748.4px;top:142.6px;width:493.5px;height:44.7px;border:1px solid #e4e7ec;border-radius:7px;background:#fff;box-shadow:0 1px 3px rgba(16,24,40,0.06);"></div>
<div class="r" style="left:1755.8px;top:149.0px;width:180.4px;height:31.9px;background:#ebecf0;border-radius:5px;"></div>
<div class="r" style="left:1948.8px;top:149.0px;width:226.2px;height:31.9px;background:#ebecf0;border-radius:5px;"></div>
<svg class="r" style="left:1768.8px;top:154.0px;" width="22" height="22" viewBox="0 0 24 24" fill="none" stroke="#1e293b" stroke-width="1.64" stroke-linecap="round" stroke-linejoin="round"><circle cx="6" cy="19" r="2.5"/><circle cx="18" cy="5.5" r="2.5"/><path d="M6 3v13.5"/><path d="M18 8c0 5-4 7.5-10.5 9.5"/></svg>
<div class="t" style="left:1801.3px;top:157.5px;font-size:17.5px;color:#1f2937;font-weight:normal;font-family:'Liberation Sans', sans-serif;letter-spacing:0.6px;">Clusters</div>
<div class="t" style="left:1883.8px;top:157.5px;font-size:17.5px;color:#1e293b;font-weight:bold;font-family:'Liberation Sans', sans-serif;letter-spacing:0.3px;">3/3</div>
<svg class="r" style="left:1960.2px;top:153.0px;" width="24" height="24" viewBox="0 0 24 24" fill="none" stroke="#1e293b" stroke-width="1.50" stroke-linecap="round" stroke-linejoin="round"><circle cx="12.4" cy="11.9" r="10.2"/><path d="M2.4 10.3h4.3a1.4 1.4 0 0 1 1.4 1.4v1.4a1.4 1.4 0 0 1-1.4 1.4h-.3a1 1 0 0 0-1 1v3.6"/><path d="M16.3 2.6v2.6a2 2 0 0 0 2 2h.8a1.2 1.2 0 0 1 1.2 1.2v3.9h2.2"/></svg>
<div class="t" style="left:1994.5px;top:157.5px;font-size:17.5px;color:#475569;font-weight:normal;font-family:'Liberation Sans', sans-serif;letter-spacing:0.6px;">Environments</div>
<div class="t" style="left:2122.2px;top:157.5px;font-size:17.5px;color:#1e293b;font-weight:bold;font-family:'Liberation Sans', sans-serif;letter-spacing:0.3px;">3/3</div>
<svg class="r" style="left:2208.0px;top:153.0px;" width="24" height="24" viewBox="0 0 24 24" fill="none" stroke="#334155" stroke-width="1.40" stroke-linecap="round" stroke-linejoin="round"><path d="m6 9 6 6 6-6"/></svg>
<div class="r" style="left:2255.4px;top:144.3px;width:256.2px;height:41.6px;border:1px solid #e4e7ec;border-radius:7px;background:#fff;box-shadow:0 1px 3px rgba(16,24,40,0.05);"></div>
<svg class="r" style="left:2268.8px;top:150.1px;" width="29" height="29" viewBox="0 0 24 24" fill="none" stroke="#4b5563" stroke-width="1.16" stroke-linecap="round" stroke-linejoin="round"><rect x="3.2" y="6.1" width="18.2" height="13.4" rx="0.8"/><path d="M3.2 10.5h18.2"/><path d="M8 3.5v4"/><path d="M16.5 3.5v4"/></svg>
<div class="t" style="left:2311.5px;top:155.8px;font-size:19px;color:#475569;font-weight:normal;font-family:'Liberation Sans', sans-serif;letter-spacing:1.1px;">Last 15 minutes</div>
<svg class="r" style="left:2477.6px;top:153.4px;" width="24" height="24" viewBox="0 0 24 24" fill="none" stroke="#334155" stroke-width="1.40" stroke-linecap="round" stroke-linejoin="round"><path d="m6 9 6 6 6-6"/></svg>
<svg class="r" style="left:2534.8px;top:150.9px;" width="28" height="28" viewBox="0 0 24 24" fill="none" stroke="#4b5563" stroke-width="1.20" stroke-linecap="round" stroke-linejoin="round"><path d="M15.6 3.8A9.8 9 0 0 0 4.6 17.6"/><path d="M5.2 14.2v3.9H1.2"/><path d="M8.3 20.1A9.8 9 0 0 0 19.3 6.7"/><path d="M18.4 9.8V5.9h4.3"/></svg>
<div class="r" style="left:446.0px;top:221.3px;width:1652.3px;height:52.9px;border:1px solid #e4e7ec;border-radius:8px;background:#fff;"></div>
<div class="r" style="left:2039.7px;top:222.3px;width:57.6px;height:50.9px;background:#f8fafc;border-left:1px solid #e4e7ec;border-radius:0 7px 7px 0;"></div>
<svg class="r" style="left:2054.8px;top:233.9px;" width="28" height="28" viewBox="0 0 24 24" fill="none" stroke="#1e293b" stroke-width="1.29" stroke-linecap="round" stroke-linejoin="round"><path d="m7 7-5 5 5 5"/><path d="m17 7 5 5-5 5"/><path d="m14 3-4 18"/></svg>
<svg class="r" style="left:469.5px;top:232.2px;" width="28" height="28" viewBox="0 0 24 24" fill="none" stroke="#596275" stroke-width="1.71" stroke-linecap="round" stroke-linejoin="round"><circle cx="11.2" cy="11.6" r="9"/><path d="m18 18.1 3.8 3.5"/></svg>
<div class="t" style="left:508.0px;top:237.9px;font-size:21px;color:#64748b;font-weight:normal;font-family:'Liberation Mono', monospace;">Type</div>
<div class="r" style="left:571.2px;top:230.6px;width:34.9px;height:31.4px;background:#f3f4f7;border:1px solid #e4e7ec;border-radius:5px;"></div>
<div class="t" style="left:582.0px;top:237.9px;font-size:21px;color:#334155;font-weight:normal;font-family:'Liberation Mono', monospace;">/</div>
<div class="t" style="left:620.1px;top:237.9px;font-size:21px;color:#64748b;font-weight:normal;font-family:'Liberation Mono', monospace;">to filter by levels, formats, pods and more</div>
<div class="r" style="left:2113.5px;top:225.5px;width:257.8px;height:44.7px;border:1px solid #e4e7ec;border-radius:7px;background:#fff;box-shadow:0 1px 3px rgba(16,24,40,0.05);"></div>
<div class="t" style="left:2133.0px;top:238.1px;font-size:19.5px;color:#3b4657;font-weight:bold;font-family:'Liberation Sans', sans-serif;letter-spacing:0.72px;">Open in Data Explorer</div>
<div class="r" style="left:2384.8px;top:226.3px;width:187.2px;height:43.0px;background:#2a5bdf;border-radius:7px;"></div>
<div class="t" style="left:2403.7px;top:238.1px;font-size:19.5px;color:#ffffff;font-weight:bold;font-family:'Liberation Sans', sans-serif;letter-spacing:1.0px;">Create Monitor</div>
<div class="r" style="left:444.6px;top:293.0px;width:2127.1px;height:165.1px;border:1px solid #e4e7ec;border-radius:7px;background:#fff;"></div>
<div class="t" style="right:2202.3px;top:314.0px;font-size:16.5px;color:#64748b;font-weight:normal;font-family:'Liberation Sans', sans-serif;">10K</div>
<div class="t" style="right:2202.3px;top:361.3px;font-size:16.5px;color:#64748b;font-weight:normal;font-family:'Liberation Sans', sans-serif;">5K</div>
<div class="t" style="right:2202.3px;top:408.7px;font-size:16.5px;color:#64748b;font-weight:normal;font-family:'Liberation Sans', sans-serif;">0</div>
<div class="r" style="left:516.5px;top:323.2px;width:2021.8px;height:1.2px;background:#eceef2;"></div>
<div class="r" style="left:516.5px;top:370.7px;width:2021.8px;height:1.2px;background:#eceef2;"></div>
<div class="r" style="left:516.5px;top:418.1px;width:2021.8px;height:1.2px;background:#eceef2;"></div>
<div class="r" style="left:516.5px;top:370.1px;width:15.5px;height:48.0px;background:linear-gradient(to top,#8088f0 0,#8088f0 7.5px,#86bfd3 7.5px,#86bfd3 10.7px,#9aa1b1 10.7px,#9ba2b2 calc(100% - 1.5px),#c54a5d calc(100% - 1.5px));"></div><div class="r" style="left:538.8px;top:361.9px;width:15.5px;height:56.2px;background:linear-gradient(to top,#8088f0 0,#8088f0 7px,#86bfd3 7px,#86bfd3 10.2px,#9aa1b1 10.2px,#9ba2b2 calc(100% - 1.5px),#c54a5d calc(100% - 1.5px));"></div><div class="r" style="left:561.1px;top:374.9px;width:15.5px;height:43.2px;background:linear-gradient(to top,#8088f0 0,#8088f0 8px,#86bfd3 8px,#86bfd3 11.2px,#9aa1b1 11.2px,#9ba2b2 calc(100% - 1.5px),#c54a5d calc(100% - 1.5px));"></div><div class="r" style="left:583.4px;top:375.3px;width:15.5px;height:42.8px;background:linear-gradient(to top,#8088f0 0,#8088f0 9px,#86bfd3 9px,#86bfd3 12.2px,#9aa1b1 12.2px,#9ba2b2 calc(100% - 1.5px),#c54a5d calc(100% - 1.5px));"></div><div class="r" style="left:605.7px;top:370.7px;width:15.5px;height:47.4px;background:linear-gradient(to top,#8088f0 0,#8088f0 6px,#86bfd3 6px,#86bfd3 9.2px,#9aa1b1 9.2px,#9ba2b2 calc(100% - 1.5px),#c54a5d calc(100% - 1.5px));"></div><div class="r" style="left:628.0px;top:373.4px;width:15.5px;height:44.7px;background:linear-gradient(to top,#8088f0 0,#8088f0 6px,#86bfd3 6px,#86bfd3 9.2px,#9aa1b1 9.2px,#9ba2b2 calc(100% - 1.5px),#c54a5d calc(100% - 1.5px));"></div><div class="r" style="left:650.2px;top:377.8px;width:15.5px;height:40.3px;background:linear-gradient(to top,#8088f0 0,#8088f0 10px,#86bfd3 10px,#86bfd3 13.2px,#9aa1b1 13.2px,#9ba2b2 calc(100% - 1.5px),#c54a5d calc(100% - 1.5px));"></div><div class="r" style="left:672.5px;top:373.0px;width:15.5px;height:45.1px;background:linear-gradient(to top,#8088f0 0,#8088f0 8.5px,#86bfd3 8.5px,#86bfd3 11.7px,#9aa1b1 11.7px,#9ba2b2 calc(100% - 1.5px),#c54a5d calc(100% - 1.5px));"></div><div class="r" style="left:694.8px;top:377.8px;width:15.5px;height:40.3px;background:linear-gradient(to top,#8088f0 0,#8088f0 6px,#86bfd3 6px,#86bfd3 9.2px,#9aa1b1 9.2px,#9ba2b2 calc(100% - 1.5px),#c54a5d calc(100% - 1.5px));"></div><div class="r" style="left:717.1px;top:378.8px;width:15.5px;height:39.3px;background:linear-gradient(to top,#8088f0 0,#8088f0 7.5px,#86bfd3 7.5px,#86bfd3 10.7px,#9aa1b1 10.7px,#9ba2b2 calc(100% - 1.5px),#c54a5d calc(100% - 1.5px));"></div><div class="r" style="left:739.4px;top:381.7px;width:15.5px;height:36.4px;background:linear-gradient(to top,#8088f0 0,#8088f0 8.5px,#86bfd3 8.5px,#86bfd3 11.7px,#9aa1b1 11.7px,#9ba2b2 calc(100% - 1.5px),#c54a5d calc(100% - 1.5px));"></div><div class="r" style="left:761.7px;top:375.9px;width:15.5px;height:42.2px;background:linear-gradient(to top,#8088f0 0,#8088f0 6px,#86bfd3 6px,#86bfd3 9.2px,#9aa1b1 9.2px,#9ba2b2 calc(100% - 1.5px),#c54a5d calc(100% - 1.5px));"></div><div class="r" style="left:784.0px;top:378.4px;width:15.5px;height:39.7px;background:linear-gradient(to top,#8088f0 0,#8088f0 8.5px,#86bfd3 8.5px,#86bfd3 11.7px,#9aa1b1 11.7px,#9ba2b2 calc(100% - 1.5px),#c54a5d calc(100% - 1.5px));"></div><div class="r" style="left:806.3px;top:375.5px;width:15.5px;height:42.6px;background:linear-gradient(to top,#8088f0 0,#8088f0 7px,#86bfd3 7px,#86bfd3 10.2px,#9aa1b1 10.2px,#9ba2b2 calc(100% - 1.5px),#c54a5d calc(100% - 1.5px));"></div><div class="r" style="left:828.6px;top:367.8px;width:15.5px;height:50.3px;background:linear-gradient(to top,#8088f0 0,#8088f0 6px,#86bfd3 6px,#86bfd3 9.2px,#9aa1b1 9.2px,#9ba2b2 calc(100% - 1.5px),#c54a5d calc(100% - 1.5px));"></div><div class="r" style="left:850.8px;top:383.7px;width:15.5px;height:34.4px;background:linear-gradient(to top,#8088f0 0,#8088f0 6px,#86bfd3 6px,#86bfd3 9.2px,#9aa1b1 9.2px,#9ba2b2 calc(100% - 1.5px),#c54a5d calc(100% - 1.5px));"></div><div class="r" style="left:873.1px;top:375.9px;width:15.5px;height:42.2px;background:linear-gradient(to top,#8088f0 0,#8088f0 8px,#86bfd3 8px,#86bfd3 11.2px,#9aa1b1 11.2px,#9ba2b2 calc(100% - 1.5px),#c54a5d calc(100% - 1.5px));"></div><div class="r" style="left:895.4px;top:374.2px;width:15.5px;height:43.9px;background:linear-gradient(to top,#8088f0 0,#8088f0 8px,#86bfd3 8px,#86bfd3 11.2px,#9aa1b1 11.2px,#9ba2b2 calc(100% - 1.5px),#c54a5d calc(100% - 1.5px));"></div><div class="r" style="left:917.7px;top:374.5px;width:15.5px;height:43.6px;background:linear-gradient(to top,#8088f0 0,#8088f0 6px,#86bfd3 6px,#86bfd3 9.2px,#9aa1b1 9.2px,#9ba2b2 calc(100% - 1.5px),#c54a5d calc(100% - 1.5px));"></div><div class="r" style="left:940.0px;top:374.2px;width:15.5px;height:43.9px;background:linear-gradient(to top,#8088f0 0,#8088f0 7px,#86bfd3 7px,#86bfd3 10.2px,#9aa1b1 10.2px,#9ba2b2 calc(100% - 1.5px),#c54a5d calc(100% - 1.5px));"></div><div class="r" style="left:962.3px;top:374.2px;width:15.5px;height:43.9px;background:linear-gradient(to top,#8088f0 0,#8088f0 6px,#86bfd3 6px,#86bfd3 9.2px,#9aa1b1 9.2px,#9ba2b2 calc(100% - 1.5px),#c54a5d calc(100% - 1.5px));"></div><div class="r" style="left:984.6px;top:374.2px;width:15.5px;height:43.9px;background:linear-gradient(to top,#8088f0 0,#8088f0 8.5px,#86bfd3 8.5px,#86bfd3 11.7px,#9aa1b1 11.7px,#9ba2b2 calc(100% - 1.5px),#c54a5d calc(100% - 1.5px));"></div><div class="r" style="left:1006.9px;top:376.1px;width:15.5px;height:42.0px;background:linear-gradient(to top,#8088f0 0,#8088f0 8px,#86bfd3 8px,#86bfd3 11.2px,#9aa1b1 11.2px,#9ba2b2 calc(100% - 1.5px),#c54a5d calc(100% - 1.5px));"></div><div class="r" style="left:1029.2px;top:376.9px;width:15.5px;height:41.2px;background:linear-gradient(to top,#8088f0 0,#8088f0 6px,#86bfd3 6px,#86bfd3 9.2px,#9aa1b1 9.2px,#9ba2b2 calc(100% - 1.5px),#c54a5d calc(100% - 1.5px));"></div><div class="r" style="left:1051.5px;top:373.0px;width:15.5px;height:45.1px;background:linear-gradient(to top,#8088f0 0,#8088f0 10px,#86bfd3 10px,#86bfd3 13.2px,#9aa1b1 13.2px,#9ba2b2 calc(100% - 1.5px),#c54a5d calc(100% - 1.5px));"></div><div class="r" style="left:1073.8px;top:367.8px;width:15.5px;height:50.3px;background:linear-gradient(to top,#8088f0 0,#8088f0 8.5px,#86bfd3 8.5px,#86bfd3 11.7px,#9aa1b1 11.7px,#9ba2b2 calc(100% - 1.5px),#c54a5d calc(100% - 1.5px));"></div><div class="r" style="left:1096.0px;top:374.9px;width:15.5px;height:43.2px;background:linear-gradient(to top,#8088f0 0,#8088f0 6px,#86bfd3 6px,#86bfd3 9.2px,#9aa1b1 9.2px,#9ba2b2 calc(100% - 1.5px),#c54a5d calc(100% - 1.5px));"></div><div class="r" style="left:1118.3px;top:373.4px;width:15.5px;height:44.7px;background:linear-gradient(to top,#8088f0 0,#8088f0 7px,#86bfd3 7px,#86bfd3 10.2px,#9aa1b1 10.2px,#9ba2b2 calc(100% - 1.5px),#c54a5d calc(100% - 1.5px));"></div><div class="r" style="left:1140.6px;top:379.2px;width:15.5px;height:38.9px;background:linear-gradient(to top,#8088f0 0,#8088f0 9px,#86bfd3 9px,#86bfd3 12.2px,#9aa1b1 12.2px,#9ba2b2 calc(100% - 1.5px),#c54a5d calc(100% - 1.5px));"></div><div class="r" style="left:1162.9px;top:374.0px;width:15.5px;height:44.1px;background:linear-gradient(to top,#8088f0 0,#8088f0 9px,#86bfd3 9px,#86bfd3 12.2px,#9aa1b1 12.2px,#9ba2b2 calc(100% - 1.5px),#c54a5d calc(100% - 1.5px));"></div><div class="r" style="left:1185.2px;top:371.0px;width:15.5px;height:47.1px;background:linear-gradient(to top,#8088f0 0,#8088f0 8.5px,#86bfd3 8.5px,#86bfd3 11.7px,#9aa1b1 11.7px,#9ba2b2 calc(100% - 1.5px),#c54a5d calc(100% - 1.5px));"></div><div class="r" style="left:1207.5px;top:373.0px;width:15.5px;height:45.1px;background:linear-gradient(to top,#8088f0 0,#8088f0 6px,#86bfd3 6px,#86bfd3 9.2px,#9aa1b1 9.2px,#9ba2b2 calc(100% - 1.5px),#c54a5d calc(100% - 1.5px));"></div><div class="r" style="left:1229.8px;top:370.7px;width:15.5px;height:47.4px;background:linear-gradient(to top,#8088f0 0,#8088f0 8.5px,#86bfd3 8.5px,#86bfd3 11.7px,#9aa1b1 11.7px,#9ba2b2 calc(100% - 1.5px),#c54a5d calc(100% - 1.5px));"></div><div class="r" style="left:1252.1px;top:377.8px;width:15.5px;height:40.3px;background:linear-gradient(to top,#8088f0 0,#8088f0 8.5px,#86bfd3 8.5px,#86bfd3 11.7px,#9aa1b1 11.7px,#9ba2b2 calc(100% - 1.5px),#c54a5d calc(100% - 1.5px));"></div><div class="r" style="left:1274.4px;top:369.1px;width:15.5px;height:49.0px;background:linear-gradient(to top,#8088f0 0,#8088f0 8px,#86bfd3 8px,#86bfd3 11.2px,#9aa1b1 11.2px,#9ba2b2 calc(100% - 1.5px),#c54a5d calc(100% - 1.5px));"></div><div class="r" style="left:1296.7px;top:376.9px;width:15.5px;height:41.2px;background:linear-gradient(to top,#8088f0 0,#8088f0 6px,#86bfd3 6px,#86bfd3 9.2px,#9aa1b1 9.2px,#9ba2b2 calc(100% - 1.5px),#c54a5d calc(100% - 1.5px));"></div><div class="r" style="left:1318.9px;top:372.6px;width:15.5px;height:45.5px;background:linear-gradient(to top,#8088f0 0,#8088f0 7px,#86bfd3 7px,#86bfd3 10.2px,#9aa1b1 10.2px,#9ba2b2 calc(100% - 1.5px),#c54a5d calc(100% - 1.5px));"></div><div class="r" style="left:1341.2px;top:369.1px;width:15.5px;height:49.0px;background:linear-gradient(to top,#8088f0 0,#8088f0 6px,#86bfd3 6px,#86bfd3 9.2px,#9aa1b1 9.2px,#9ba2b2 calc(100% - 1.5px),#c54a5d calc(100% - 1.5px));"></div><div class="r" style="left:1363.5px;top:374.0px;width:15.5px;height:44.1px;background:linear-gradient(to top,#8088f0 0,#8088f0 8.5px,#86bfd3 8.5px,#86bfd3 11.7px,#9aa1b1 11.7px,#9ba2b2 calc(100% - 1.5px),#c54a5d calc(100% - 1.5px));"></div><div class="r" style="left:1385.8px;top:378.8px;width:15.5px;height:39.3px;background:linear-gradient(to top,#8088f0 0,#8088f0 10px,#86bfd3 10px,#86bfd3 13.2px,#9aa1b1 13.2px,#9ba2b2 calc(100% - 1.5px),#c54a5d calc(100% - 1.5px));"></div><div class="r" style="left:1408.1px;top:370.1px;width:15.5px;height:48.0px;background:linear-gradient(to top,#8088f0 0,#8088f0 7px,#86bfd3 7px,#86bfd3 10.2px,#9aa1b1 10.2px,#9ba2b2 calc(100% - 1.5px),#c54a5d calc(100% - 1.5px));"></div><div class="r" style="left:1430.4px;top:373.0px;width:15.5px;height:45.1px;background:linear-gradient(to top,#8088f0 0,#8088f0 7.5px,#86bfd3 7.5px,#86bfd3 10.7px,#9aa1b1 10.7px,#9ba2b2 calc(100% - 1.5px),#c54a5d calc(100% - 1.5px));"></div><div class="r" style="left:1452.7px;top:377.8px;width:15.5px;height:40.3px;background:linear-gradient(to top,#8088f0 0,#8088f0 8px,#86bfd3 8px,#86bfd3 11.2px,#9aa1b1 11.2px,#9ba2b2 calc(100% - 1.5px),#c54a5d calc(100% - 1.5px));"></div><div class="r" style="left:1475.0px;top:364.8px;width:15.5px;height:53.3px;background:linear-gradient(to top,#8088f0 0,#8088f0 7px,#86bfd3 7px,#86bfd3 10.2px,#9aa1b1 10.2px,#9ba2b2 calc(100% - 1.5px),#c54a5d calc(100% - 1.5px));"></div><div class="r" style="left:1497.3px;top:379.4px;width:15.5px;height:38.7px;background:linear-gradient(to top,#8088f0 0,#8088f0 8.5px,#86bfd3 8.5px,#86bfd3 11.7px,#9aa1b1 11.7px,#9ba2b2 calc(100% - 1.5px),#c54a5d calc(100% - 1.5px));"></div><div class="r" style="left:1519.5px;top:376.1px;width:15.5px;height:42.0px;background:linear-gradient(to top,#8088f0 0,#8088f0 6px,#86bfd3 6px,#86bfd3 9.2px,#9aa1b1 9.2px,#9ba2b2 calc(100% - 1.5px),#c54a5d calc(100% - 1.5px));"></div><div class="r" style="left:1541.8px;top:378.4px;width:15.5px;height:39.7px;background:linear-gradient(to top,#8088f0 0,#8088f0 8.5px,#86bfd3 8.5px,#86bfd3 11.7px,#9aa1b1 11.7px,#9ba2b2 calc(100% - 1.5px),#c54a5d calc(100% - 1.5px));"></div><div class="r" style="left:1564.1px;top:374.9px;width:15.5px;height:43.2px;background:linear-gradient(to top,#8088f0 0,#8088f0 7.5px,#86bfd3 7.5px,#86bfd3 10.7px,#9aa1b1 10.7px,#9ba2b2 calc(100% - 1.5px),#c54a5d calc(100% - 1.5px));"></div><div class="r" style="left:1586.4px;top:377.3px;width:15.5px;height:40.8px;background:linear-gradient(to top,#8088f0 0,#8088f0 8.5px,#86bfd3 8.5px,#86bfd3 11.7px,#9aa1b1 11.7px,#9ba2b2 calc(100% - 1.5px),#c54a5d calc(100% - 1.5px));"></div><div class="r" style="left:1608.7px;top:363.5px;width:15.5px;height:54.6px;background:linear-gradient(to top,#8088f0 0,#8088f0 10px,#86bfd3 10px,#86bfd3 13.2px,#9aa1b1 13.2px,#9ba2b2 calc(100% - 1.5px),#c54a5d calc(100% - 1.5px));"></div><div class="r" style="left:1631.0px;top:371.8px;width:15.5px;height:46.3px;background:linear-gradient(to top,#8088f0 0,#8088f0 9px,#86bfd3 9px,#86bfd3 12.2px,#9aa1b1 12.2px,#9ba2b2 calc(100% - 1.5px),#c54a5d calc(100% - 1.5px));"></div><div class="r" style="left:1653.3px;top:378.8px;width:15.5px;height:39.3px;background:linear-gradient(to top,#8088f0 0,#8088f0 7px,#86bfd3 7px,#86bfd3 10.2px,#9aa1b1 10.2px,#9ba2b2 calc(100% - 1.5px),#c54a5d calc(100% - 1.5px));"></div><div class="r" style="left:1675.6px;top:375.1px;width:15.5px;height:43.0px;background:linear-gradient(to top,#8088f0 0,#8088f0 6px,#86bfd3 6px,#86bfd3 9.2px,#9aa1b1 9.2px,#9ba2b2 calc(100% - 1.5px),#c54a5d calc(100% - 1.5px));"></div><div class="r" style="left:1697.9px;top:374.7px;width:15.5px;height:43.4px;background:linear-gradient(to top,#8088f0 0,#8088f0 8.5px,#86bfd3 8.5px,#86bfd3 11.7px,#9aa1b1 11.7px,#9ba2b2 calc(100% - 1.5px),#c54a5d calc(100% - 1.5px));"></div><div class="r" style="left:1720.2px;top:374.5px;width:15.5px;height:43.6px;background:linear-gradient(to top,#8088f0 0,#8088f0 8.5px,#86bfd3 8.5px,#86bfd3 11.7px,#9aa1b1 11.7px,#9ba2b2 calc(100% - 1.5px),#c54a5d calc(100% - 1.5px));"></div><div class="r" style="left:1742.5px;top:370.7px;width:15.5px;height:47.4px;background:linear-gradient(to top,#8088f0 0,#8088f0 9px,#86bfd3 9px,#86bfd3 12.2px,#9aa1b1 12.2px,#9ba2b2 calc(100% - 1.5px),#c54a5d calc(100% - 1.5px));"></div><div class="r" style="left:1764.7px;top:376.9px;width:15.5px;height:41.2px;background:linear-gradient(to top,#8088f0 0,#8088f0 7px,#86bfd3 7px,#86bfd3 10.2px,#9aa1b1 10.2px,#9ba2b2 calc(100% - 1.5px),#c54a5d calc(100% - 1.5px));"></div><div class="r" style="left:1787.0px;top:373.4px;width:15.5px;height:44.7px;background:linear-gradient(to top,#8088f0 0,#8088f0 7.5px,#86bfd3 7.5px,#86bfd3 10.7px,#9aa1b1 10.7px,#9ba2b2 calc(100% - 1.5px),#c54a5d calc(100% - 1.5px));"></div><div class="r" style="left:1809.3px;top:378.0px;width:15.5px;height:40.1px;background:linear-gradient(to top,#8088f0 0,#8088f0 6px,#86bfd3 6px,#86bfd3 9.2px,#9aa1b1 9.2px,#9ba2b2 calc(100% - 1.5px),#c54a5d calc(100% - 1.5px));"></div><div class="r" style="left:1831.6px;top:380.0px;width:15.5px;height:38.1px;background:linear-gradient(to top,#8088f0 0,#8088f0 8.5px,#86bfd3 8.5px,#86bfd3 11.7px,#9aa1b1 11.7px,#9ba2b2 calc(100% - 1.5px),#c54a5d calc(100% - 1.5px));"></div><div class="r" style="left:1853.9px;top:378.0px;width:15.5px;height:40.1px;background:linear-gradient(to top,#8088f0 0,#8088f0 9px,#86bfd3 9px,#86bfd3 12.2px,#9aa1b1 12.2px,#9ba2b2 calc(100% - 1.5px),#c54a5d calc(100% - 1.5px));"></div><div class="r" style="left:1876.2px;top:369.1px;width:15.5px;height:49.0px;background:linear-gradient(to top,#8088f0 0,#8088f0 6px,#86bfd3 6px,#86bfd3 9.2px,#9aa1b1 9.2px,#9ba2b2 calc(100% - 1.5px),#c54a5d calc(100% - 1.5px));"></div><div class="r" style="left:1898.5px;top:378.0px;width:15.5px;height:40.1px;background:linear-gradient(to top,#8088f0 0,#8088f0 8.5px,#86bfd3 8.5px,#86bfd3 11.7px,#9aa1b1 11.7px,#9ba2b2 calc(100% - 1.5px),#c54a5d calc(100% - 1.5px));"></div><div class="r" style="left:1920.8px;top:375.9px;width:15.5px;height:42.2px;background:linear-gradient(to top,#8088f0 0,#8088f0 6px,#86bfd3 6px,#86bfd3 9.2px,#9aa1b1 9.2px,#9ba2b2 calc(100% - 1.5px),#c54a5d calc(100% - 1.5px));"></div><div class="r" style="left:1943.1px;top:375.7px;width:15.5px;height:42.4px;background:linear-gradient(to top,#8088f0 0,#8088f0 8.5px,#86bfd3 8.5px,#86bfd3 11.7px,#9aa1b1 11.7px,#9ba2b2 calc(100% - 1.5px),#c54a5d calc(100% - 1.5px));"></div><div class="r" style="left:1965.3px;top:376.9px;width:15.5px;height:41.2px;background:linear-gradient(to top,#8088f0 0,#8088f0 7px,#86bfd3 7px,#86bfd3 10.2px,#9aa1b1 10.2px,#9ba2b2 calc(100% - 1.5px),#c54a5d calc(100% - 1.5px));"></div><div class="r" style="left:1987.6px;top:373.4px;width:15.5px;height:44.7px;background:linear-gradient(to top,#8088f0 0,#8088f0 8px,#86bfd3 8px,#86bfd3 11.2px,#9aa1b1 11.2px,#9ba2b2 calc(100% - 1.5px),#c54a5d calc(100% - 1.5px));"></div><div class="r" style="left:2009.9px;top:368.3px;width:15.5px;height:49.8px;background:linear-gradient(to top,#8088f0 0,#8088f0 9px,#86bfd3 9px,#86bfd3 12.2px,#9aa1b1 12.2px,#9ba2b2 calc(100% - 1.5px),#c54a5d calc(100% - 1.5px));"></div><div class="r" style="left:2032.2px;top:372.2px;width:15.5px;height:45.9px;background:linear-gradient(to top,#8088f0 0,#8088f0 8.5px,#86bfd3 8.5px,#86bfd3 11.7px,#9aa1b1 11.7px,#9ba2b2 calc(100% - 1.5px),#c54a5d calc(100% - 1.5px));"></div><div class="r" style="left:2054.5px;top:374.1px;width:15.5px;height:44.0px;background:linear-gradient(to top,#8088f0 0,#8088f0 8px,#86bfd3 8px,#86bfd3 11.2px,#9aa1b1 11.2px,#9ba2b2 calc(100% - 1.5px),#c54a5d calc(100% - 1.5px));"></div><div class="r" style="left:2076.8px;top:382.8px;width:15.5px;height:35.3px;background:linear-gradient(to top,#8088f0 0,#8088f0 10px,#86bfd3 10px,#86bfd3 13.2px,#9aa1b1 13.2px,#9ba2b2 calc(100% - 1.5px),#c54a5d calc(100% - 1.5px));"></div><div class="r" style="left:2099.1px;top:377.0px;width:15.5px;height:41.1px;background:linear-gradient(to top,#8088f0 0,#8088f0 7.5px,#86bfd3 7.5px,#86bfd3 10.7px,#9aa1b1 10.7px,#9ba2b2 calc(100% - 1.5px),#c54a5d calc(100% - 1.5px));"></div><div class="r" style="left:2121.4px;top:374.1px;width:15.5px;height:44.0px;background:linear-gradient(to top,#8088f0 0,#8088f0 8px,#86bfd3 8px,#86bfd3 11.2px,#9aa1b1 11.2px,#9ba2b2 calc(100% - 1.5px),#c54a5d calc(100% - 1.5px));"></div><div class="r" style="left:2143.7px;top:369.3px;width:15.5px;height:48.8px;background:linear-gradient(to top,#8088f0 0,#8088f0 8.5px,#86bfd3 8.5px,#86bfd3 11.7px,#9aa1b1 11.7px,#9ba2b2 calc(100% - 1.5px),#c54a5d calc(100% - 1.5px));"></div><div class="r" style="left:2166.0px;top:375.4px;width:15.5px;height:42.7px;background:linear-gradient(to top,#8088f0 0,#8088f0 8px,#86bfd3 8px,#86bfd3 11.2px,#9aa1b1 11.2px,#9ba2b2 calc(100% - 1.5px),#c54a5d calc(100% - 1.5px));"></div><div class="r" style="left:2188.2px;top:369.1px;width:15.5px;height:49.0px;background:linear-gradient(to top,#8088f0 0,#8088f0 7.5px,#86bfd3 7.5px,#86bfd3 10.7px,#9aa1b1 10.7px,#9ba2b2 calc(100% - 1.5px),#c54a5d calc(100% - 1.5px));"></div><div class="r" style="left:2210.5px;top:377.0px;width:15.5px;height:41.1px;background:linear-gradient(to top,#8088f0 0,#8088f0 7.5px,#86bfd3 7.5px,#86bfd3 10.7px,#9aa1b1 10.7px,#9ba2b2 calc(100% - 1.5px),#c54a5d calc(100% - 1.5px));"></div><div class="r" style="left:2232.8px;top:367.8px;width:15.5px;height:50.3px;background:linear-gradient(to top,#8088f0 0,#8088f0 7px,#86bfd3 7px,#86bfd3 10.2px,#9aa1b1 10.2px,#9ba2b2 calc(100% - 1.5px),#c54a5d calc(100% - 1.5px));"></div><div class="r" style="left:2255.1px;top:378.5px;width:15.5px;height:39.6px;background:linear-gradient(to top,#8088f0 0,#8088f0 10px,#86bfd3 10px,#86bfd3 13.2px,#9aa1b1 13.2px,#9ba2b2 calc(100% - 1.5px),#c54a5d calc(100% - 1.5px));"></div><div class="r" style="left:2277.4px;top:368.7px;width:15.5px;height:49.4px;background:linear-gradient(to top,#8088f0 0,#8088f0 7px,#86bfd3 7px,#86bfd3 10.2px,#9aa1b1 10.2px,#9ba2b2 calc(100% - 1.5px),#c54a5d calc(100% - 1.5px));"></div><div class="r" style="left:2299.7px;top:374.8px;width:15.5px;height:43.3px;background:linear-gradient(to top,#8088f0 0,#8088f0 9px,#86bfd3 9px,#86bfd3 12.2px,#9aa1b1 12.2px,#9ba2b2 calc(100% - 1.5px),#c54a5d calc(100% - 1.5px));"></div><div class="r" style="left:2322.0px;top:373.7px;width:15.5px;height:44.4px;background:linear-gradient(to top,#8088f0 0,#8088f0 10px,#86bfd3 10px,#86bfd3 13.2px,#9aa1b1 13.2px,#9ba2b2 calc(100% - 1.5px),#c54a5d calc(100% - 1.5px));"></div><div class="r" style="left:2344.3px;top:380.0px;width:15.5px;height:38.1px;background:linear-gradient(to top,#8088f0 0,#8088f0 7px,#86bfd3 7px,#86bfd3 10.2px,#9aa1b1 10.2px,#9ba2b2 calc(100% - 1.5px),#c54a5d calc(100% - 1.5px));"></div><div class="r" style="left:2366.6px;top:373.3px;width:15.5px;height:44.8px;background:linear-gradient(to top,#8088f0 0,#8088f0 6px,#86bfd3 6px,#86bfd3 9.2px,#9aa1b1 9.2px,#9ba2b2 calc(100% - 1.5px),#c54a5d calc(100% - 1.5px));"></div><div class="r" style="left:2388.9px;top:373.3px;width:15.5px;height:44.8px;background:linear-gradient(to top,#8088f0 0,#8088f0 8.5px,#86bfd3 8.5px,#86bfd3 11.7px,#9aa1b1 11.7px,#9ba2b2 calc(100% - 1.5px),#c54a5d calc(100% - 1.5px));"></div><div class="r" style="left:2411.1px;top:363.5px;width:15.5px;height:54.6px;background:linear-gradient(to top,#8088f0 0,#8088f0 7.5px,#86bfd3 7.5px,#86bfd3 10.7px,#9aa1b1 10.7px,#9ba2b2 calc(100% - 1.5px),#c54a5d calc(100% - 1.5px));"></div><div class="r" style="left:2433.4px;top:375.7px;width:15.5px;height:42.4px;background:linear-gradient(to top,#8088f0 0,#8088f0 8.5px,#86bfd3 8.5px,#86bfd3 11.7px,#9aa1b1 11.7px,#9ba2b2 calc(100% - 1.5px),#c54a5d calc(100% - 1.5px));"></div><div class="r" style="left:2455.7px;top:377.2px;width:15.5px;height:40.9px;background:linear-gradient(to top,#8088f0 0,#8088f0 8px,#86bfd3 8px,#86bfd3 11.2px,#9aa1b1 11.2px,#9ba2b2 calc(100% - 1.5px),#c54a5d calc(100% - 1.5px));"></div><div class="r" style="left:2478.0px;top:377.2px;width:15.5px;height:40.9px;background:linear-gradient(to top,#8088f0 0,#8088f0 7.5px,#86bfd3 7.5px,#86bfd3 10.7px,#9aa1b1 10.7px,#9ba2b2 calc(100% - 1.5px),#c54a5d calc(100% - 1.5px));"></div><div class="r" style="left:2500.3px;top:374.1px;width:15.5px;height:44.0px;background:linear-gradient(to top,#8088f0 0,#8088f0 9px,#86bfd3 9px,#86bfd3 12.2px,#9aa1b1 12.2px,#9ba2b2 calc(100% - 1.5px),#c54a5d calc(100% - 1.5px));"></div><div class="r" style="left:2522.6px;top:395.9px;width:15.5px;height:22.2px;background:linear-gradient(to top,#8088f0 0,#8088f0 6px,#86bfd3 6px,#86bfd3 9.2px,#9aa1b1 9.2px,#9ba2b2 calc(100% - 1.5px),#c54a5d calc(100% - 1.5px));"></div>
<div class="t" style="left:291.0px;width:600px;text-align:center;top:427.8px;font-size:15.5px;color:#64748b;font-weight:normal;font-family:'Liberation Sans', sans-serif;letter-spacing:0.3px;">15:46</div>
<div class="t" style="left:558.5px;width:600px;text-align:center;top:427.8px;font-size:15.5px;color:#64748b;font-weight:normal;font-family:'Liberation Sans', sans-serif;letter-spacing:0.3px;">15:48</div>
<div class="t" style="left:826.0px;width:600px;text-align:center;top:427.8px;font-size:15.5px;color:#64748b;font-weight:normal;font-family:'Liberation Sans', sans-serif;letter-spacing:0.3px;">15:50</div>
<div class="t" style="left:1093.5px;width:600px;text-align:center;top:427.8px;font-size:15.5px;color:#64748b;font-weight:normal;font-family:'Liberation Sans', sans-serif;letter-spacing:0.3px;">15:52</div>
<div class="t" style="left:1361.0px;width:600px;text-align:center;top:427.8px;font-size:15.5px;color:#64748b;font-weight:normal;font-family:'Liberation Sans', sans-serif;letter-spacing:0.3px;">15:54</div>
<div class="t" style="left:1628.5px;width:600px;text-align:center;top:427.8px;font-size:15.5px;color:#64748b;font-weight:normal;font-family:'Liberation Sans', sans-serif;letter-spacing:0.3px;">15:56</div>
<div class="t" style="left:1896.0px;width:600px;text-align:center;top:427.8px;font-size:15.5px;color:#64748b;font-weight:normal;font-family:'Liberation Sans', sans-serif;letter-spacing:0.3px;">15:58</div>
<div class="t" style="left:2163.5px;width:600px;text-align:center;top:427.8px;font-size:15.5px;color:#64748b;font-weight:normal;font-family:'Liberation Sans', sans-serif;letter-spacing:0.3px;">16:00</div>
<svg class="r" style="left:441.5px;top:481.5px;" width="29" height="29" viewBox="0 0 24 24" fill="none" stroke="#475569" stroke-width="1.24" stroke-linecap="round" stroke-linejoin="round"><path d="m11.5 8.1-5.2 4.35 5.2 4.35"/><path d="m18 8.1-5.2 4.35L18 16.8"/></svg>
<div class="t" style="left:481.4px;top:486.0px;font-size:20px;color:#475569;font-weight:bold;font-family:'Liberation Sans', sans-serif;letter-spacing:0.4px;">Hide Filters</div>
<div class="r" style="left:2302.3px;top:485.4px;width:23.1px;height:21.1px;border:1.5px solid #d3d9e2;border-radius:4px;background:#fff;"></div>
<div class="t" style="left:2339.0px;top:485.4px;font-size:20.5px;color:#475569;font-weight:normal;font-family:'Liberation Sans', sans-serif;letter-spacing:0.85px;">Text Wrap</div>
<div class="r" style="left:2457.0px;top:482.4px;width:1.3px;height:26.5px;background:#e2e6ec;"></div>
<div class="r" style="left:2477.6px;top:476.6px;width:40.1px;height:35.7px;border:1px solid #e4e7ec;border-radius:7px;background:#fff;box-shadow:0 1px 3px rgba(16,24,40,0.05);"></div>
<svg class="r" style="left:2483.6px;top:480.4px;" width="28" height="28" viewBox="0 0 24 24" fill="none" stroke="#475569" stroke-width="1.29" stroke-linecap="round" stroke-linejoin="round"><path d="M8.1 19.4H2.3a1.5 1.5 0 0 1-1.5-1.5V3.7a1.5 1.5 0 0 1 1.5-1.5h5.8z"/><path d="M8.1 2.2h12.2a1.5 1.5 0 0 1 1.5 1.5v5.2"/><circle cx="17.2" cy="16.8" r="5.7"/><path d="M17.2 14v5.6"/><path d="M14.4 16.8h5.6"/></svg>
<div class="r" style="left:2531.5px;top:476.6px;width:39.8px;height:35.7px;border:1px solid #e4e7ec;border-radius:7px;background:#fff;box-shadow:0 1px 3px rgba(16,24,40,0.05);"></div>
<svg class="r" style="left:2537.4px;top:480.4px;" width="28" height="28" viewBox="0 0 24 24" fill="none" stroke="#475569" stroke-width="1.29" stroke-linecap="round" stroke-linejoin="round"><path d="M12.3 14.6V2.6"/><path d="M8.8 5.6 12.3 2.2l3.5 3.4"/><path d="M5.5 14.5H3.8a2 2 0 0 0-2 2v3.3a2 2 0 0 0 2 2h17a2 2 0 0 0 2-2v-3.3a2 2 0 0 0-2-2h-1.6"/></svg>
<div class="r" style="left:444.2px;top:532.2px;width:376.4px;height:1.2px;background:#eceef2;"></div>
<div class="r" style="left:447.6px;top:550.3px;width:143.7px;height:31.1px;border:1px solid #e4e7ec;border-radius:16px;background:#fafbfc;"></div>
<div class="t" style="left:467.2px;top:557.7px;font-size:16.5px;color:#475569;font-weight:normal;font-family:'Liberation Sans', sans-serif;letter-spacing:1.15px;">414K results</div>
<svg class="r" style="left:755.4px;top:555.3px;" width="22" height="22" viewBox="0 0 24 24" fill="none" stroke="#1e293b" stroke-width="1.64" stroke-linecap="round" stroke-linejoin="round"><path d="M12 3v18"/><path d="M3 12h18"/></svg>
<div class="r" style="left:444.2px;top:598.6px;width:376.4px;height:42.1px;background:#f2f3f7;border-radius:7px;"></div>
<svg class="r" style="left:458.7px;top:610.4px;" width="19" height="19" viewBox="0 0 24 24" fill="none" stroke="#475569" stroke-width="1.77" stroke-linecap="round" stroke-linejoin="round"><path d="m6 9 6 6 6-6"/></svg>
<div class="t" style="left:493.0px;top:610.8px;font-size:17px;color:#475569;font-weight:normal;font-family:'Liberation Sans', sans-serif;letter-spacing:0.85px;">General</div>
<div class="r" style="left:444.2px;top:652.0px;width:376.4px;height:1.2px;background:#eceef2;"></div>
<svg class="r" style="left:470.5px;top:676.3px;" width="19" height="19" viewBox="0 0 24 24" fill="none" stroke="#475569" stroke-width="1.77" stroke-linecap="round" stroke-linejoin="round"><path d="m6 9 6 6 6-6"/></svg>
<div class="t" style="left:505.0px;top:677.1px;font-size:17px;color:#111827;font-weight:bold;font-family:'Liberation Sans', sans-serif;letter-spacing:0.6px;">Level</div>
<div class="r" style="left:468.2px;top:718.0px;width:24.1px;height:21.5px;background:#2c64f0;border-radius:4px;"></div>
<svg class="r" style="left:472.2px;top:720.8px;" width="16" height="16" viewBox="0 0 24 24" fill="none" stroke="#ffffff" stroke-width="2.10" stroke-linecap="round" stroke-linejoin="round"><path d="M20 6 9 17l-5-5"/></svg>
<div class="r" style="left:510.3px;top:719.0px;width:4.5px;height:20.0px;background:#c23a4f;border-radius:3px;"></div>
<div class="t" style="left:524.8px;top:721.4px;font-size:16.9px;color:#2f3a4d;font-weight:normal;font-family:'Liberation Sans', sans-serif;letter-spacing:1.1px;-webkit-text-stroke:0.25px #2f3a4d;">Error</div>
<div class="t" style="right:1910.3px;top:721.6px;font-size:16.7px;color:#64748b;font-weight:normal;font-family:'Liberation Sans', sans-serif;letter-spacing:0.9px;">10K</div>
<div class="r" style="left:468.2px;top:750.4px;width:24.1px;height:21.5px;background:#2c64f0;border-radius:4px;"></div>
<svg class="r" style="left:472.2px;top:753.2px;" width="16" height="16" viewBox="0 0 24 24" fill="none" stroke="#ffffff" stroke-width="2.10" stroke-linecap="round" stroke-linejoin="round"><path d="M20 6 9 17l-5-5"/></svg>
<div class="r" style="left:510.3px;top:751.4px;width:4.5px;height:20.0px;background:#e2aa50;border-radius:3px;"></div>
<div class="t" style="left:524.8px;top:753.8px;font-size:16.9px;color:#2f3a4d;font-weight:normal;font-family:'Liberation Sans', sans-serif;letter-spacing:1.1px;-webkit-text-stroke:0.25px #2f3a4d;">Warning</div>
<div class="t" style="right:1910.3px;top:754.0px;font-size:16.7px;color:#64748b;font-weight:normal;font-family:'Liberation Sans', sans-serif;letter-spacing:0.9px;">1.3K</div>
<div class="r" style="left:468.2px;top:782.7px;width:24.1px;height:21.5px;background:#2c64f0;border-radius:4px;"></div>
<svg class="r" style="left:472.2px;top:785.5px;" width="16" height="16" viewBox="0 0 24 24" fill="none" stroke="#ffffff" stroke-width="2.10" stroke-linecap="round" stroke-linejoin="round"><path d="M20 6 9 17l-5-5"/></svg>
<div class="r" style="left:510.3px;top:783.7px;width:4.5px;height:20.0px;background:#8a8ff5;border-radius:3px;"></div>
<div class="t" style="left:524.8px;top:786.2px;font-size:16.9px;color:#2f3a4d;font-weight:normal;font-family:'Liberation Sans', sans-serif;letter-spacing:1.1px;-webkit-text-stroke:0.25px #2f3a4d;">Info</div>
<div class="t" style="right:1910.3px;top:786.3px;font-size:16.7px;color:#64748b;font-weight:normal;font-family:'Liberation Sans', sans-serif;letter-spacing:0.9px;">68K</div>
<div class="r" style="left:468.2px;top:815.1px;width:24.1px;height:21.5px;background:#2c64f0;border-radius:4px;"></div>
<svg class="r" style="left:472.2px;top:817.9px;" width="16" height="16" viewBox="0 0 24 24" fill="none" stroke="#ffffff" stroke-width="2.10" stroke-linecap="round" stroke-linejoin="round"><path d="M20 6 9 17l-5-5"/></svg>
<div class="r" style="left:510.3px;top:816.1px;width:4.5px;height:20.0px;background:#88c3d6;border-radius:3px;"></div>
<div class="t" style="left:524.8px;top:818.5px;font-size:16.9px;color:#2f3a4d;font-weight:normal;font-family:'Liberation Sans', sans-serif;letter-spacing:1.1px;-webkit-text-stroke:0.25px #2f3a4d;">Debug</div>
<div class="t" style="right:1910.3px;top:818.7px;font-size:16.7px;color:#64748b;font-weight:normal;font-family:'Liberation Sans', sans-serif;letter-spacing:0.9px;">26K</div>
<div class="r" style="left:468.2px;top:847.4px;width:24.1px;height:21.5px;background:#2c64f0;border-radius:4px;"></div>
<svg class="r" style="left:472.2px;top:850.2px;" width="16" height="16" viewBox="0 0 24 24" fill="none" stroke="#ffffff" stroke-width="2.10" stroke-linecap="round" stroke-linejoin="round"><path d="M20 6 9 17l-5-5"/></svg>
<div class="r" style="left:510.3px;top:848.4px;width:4.5px;height:20.0px;background:#c9a9c2;border-radius:3px;"></div>
<div class="t" style="left:524.8px;top:850.9px;font-size:16.9px;color:#2f3a4d;font-weight:normal;font-family:'Liberation Sans', sans-serif;letter-spacing:1.1px;-webkit-text-stroke:0.25px #2f3a4d;">Trace</div>
<div class="t" style="right:1910.3px;top:851.0px;font-size:16.7px;color:#64748b;font-weight:normal;font-family:'Liberation Sans', sans-serif;letter-spacing:0.9px;">1.9K</div>
<div class="r" style="left:468.2px;top:879.8px;width:24.1px;height:21.5px;background:#2c64f0;border-radius:4px;"></div>
<svg class="r" style="left:472.2px;top:882.6px;" width="16" height="16" viewBox="0 0 24 24" fill="none" stroke="#ffffff" stroke-width="2.10" stroke-linecap="round" stroke-linejoin="round"><path d="M20 6 9 17l-5-5"/></svg>
<div class="r" style="left:510.3px;top:880.8px;width:4.5px;height:20.0px;background:#9aa1b1;border-radius:3px;"></div>
<div class="t" style="left:524.8px;top:883.2px;font-size:16.9px;color:#2f3a4d;font-weight:normal;font-family:'Liberation Sans', sans-serif;letter-spacing:1.1px;-webkit-text-stroke:0.25px #2f3a4d;">Unknown</div>
<div class="t" style="right:1910.3px;top:883.4px;font-size:16.7px;color:#64748b;font-weight:normal;font-family:'Liberation Sans', sans-serif;letter-spacing:0.9px;">307K</div>
<div class="r" style="left:444.0px;top:920.2px;width:376.6px;height:1.2px;background:#eceef2;"></div>
<svg class="r" style="left:470.5px;top:944.5px;" width="19" height="19" viewBox="0 0 24 24" fill="none" stroke="#475569" stroke-width="1.77" stroke-linecap="round" stroke-linejoin="round"><path d="m6 9 6 6 6-6"/></svg>
<div class="t" style="left:505.0px;top:945.0px;font-size:17px;color:#111827;font-weight:bold;font-family:'Liberation Sans', sans-serif;letter-spacing:0.6px;">Format</div>
<div class="r" style="left:468.2px;top:986.0px;width:24.1px;height:21.5px;background:#2c64f0;border-radius:4px;"></div>
<svg class="r" style="left:472.2px;top:988.8px;" width="16" height="16" viewBox="0 0 24 24" fill="none" stroke="#ffffff" stroke-width="2.10" stroke-linecap="round" stroke-linejoin="round"><path d="M20 6 9 17l-5-5"/></svg>
<div class="t" style="left:510.4px;top:989.4px;font-size:16.9px;color:#2f3a4d;font-weight:normal;font-family:'Liberation Sans', sans-serif;letter-spacing:1.3px;-webkit-text-stroke:0.25px #2f3a4d;">json</div>
<div class="t" style="right:1910.0px;top:989.6px;font-size:16.7px;color:#64748b;font-weight:normal;font-family:'Liberation Sans', sans-serif;letter-spacing:0.9px;">105K</div>
<div class="r" style="left:468.2px;top:1018.3px;width:24.1px;height:21.5px;background:#2c64f0;border-radius:4px;"></div>
<svg class="r" style="left:472.2px;top:1021.1px;" width="16" height="16" viewBox="0 0 24 24" fill="none" stroke="#ffffff" stroke-width="2.10" stroke-linecap="round" stroke-linejoin="round"><path d="M20 6 9 17l-5-5"/></svg>
<div class="t" style="left:510.4px;top:1021.8px;font-size:16.9px;color:#2f3a4d;font-weight:normal;font-family:'Liberation Sans', sans-serif;letter-spacing:1.3px;-webkit-text-stroke:0.25px #2f3a4d;">logfmt</div>
<div class="t" style="right:1910.0px;top:1022.0px;font-size:16.7px;color:#64748b;font-weight:normal;font-family:'Liberation Sans', sans-serif;letter-spacing:0.9px;">1.2K</div>
<div class="r" style="left:468.2px;top:1050.7px;width:24.1px;height:21.5px;background:#2c64f0;border-radius:4px;"></div>
<svg class="r" style="left:472.2px;top:1053.5px;" width="16" height="16" viewBox="0 0 24 24" fill="none" stroke="#ffffff" stroke-width="2.10" stroke-linecap="round" stroke-linejoin="round"><path d="M20 6 9 17l-5-5"/></svg>
<div class="t" style="left:510.4px;top:1054.1px;font-size:16.9px;color:#2f3a4d;font-weight:normal;font-family:'Liberation Sans', sans-serif;letter-spacing:1.3px;-webkit-text-stroke:0.25px #2f3a4d;">unknown</div>
<div class="t" style="right:1910.0px;top:1054.3px;font-size:16.7px;color:#64748b;font-weight:normal;font-family:'Liberation Sans', sans-serif;letter-spacing:0.9px;">308K</div>
<div class="r" style="left:444.0px;top:1091.8px;width:376.6px;height:1.2px;background:#eceef2;"></div>
<svg class="r" style="left:470.5px;top:1115.5px;" width="19" height="19" viewBox="0 0 24 24" fill="none" stroke="#475569" stroke-width="1.77" stroke-linecap="round" stroke-linejoin="round"><path d="m9 18 6-6-6-6"/></svg>
<div class="t" style="left:505.0px;top:1116.5px;font-size:17px;color:#111827;font-weight:bold;font-family:'Liberation Sans', sans-serif;letter-spacing:0.6px;">Environment Type</div>
<div class="r" style="left:444.0px;top:1152.5px;width:376.6px;height:1.2px;background:#eceef2;"></div>
<svg class="r" style="left:470.5px;top:1176.0px;" width="19" height="19" viewBox="0 0 24 24" fill="none" stroke="#475569" stroke-width="1.77" stroke-linecap="round" stroke-linejoin="round"><path d="m9 18 6-6-6-6"/></svg>
<div class="t" style="left:505.0px;top:1176.8px;font-size:17px;color:#111827;font-weight:bold;font-family:'Liberation Sans', sans-serif;letter-spacing:0.6px;">Host</div>
<div class="r" style="left:444.0px;top:1213.0px;width:376.6px;height:1.2px;background:#eceef2;"></div>
<svg class="r" style="left:470.5px;top:1236.5px;" width="19" height="19" viewBox="0 0 24 24" fill="none" stroke="#475569" stroke-width="1.77" stroke-linecap="round" stroke-linejoin="round"><path d="m6 9 6 6 6-6"/></svg>
<div class="t" style="left:505.0px;top:1237.5px;font-size:17px;color:#111827;font-weight:bold;font-family:'Liberation Sans', sans-serif;letter-spacing:0.6px;">Workload</div>
<div class="r" style="left:444.7px;top:1274.4px;width:352.4px;height:41.6px;border:1px solid #e4e7ec;border-radius:7px;background:#fff;"></div>
<svg class="r" style="left:458.8px;top:1280.3px;" width="28" height="28" viewBox="0 0 24 24" fill="none" stroke="#555b66" stroke-width="1.20" stroke-linecap="round" stroke-linejoin="round"><circle cx="11.2" cy="11.6" r="9"/><path d="m18 18.1 3.8 3.5"/></svg>
<div class="t" style="left:500.9px;top:1284.6px;font-size:20.5px;color:#94a3b8;font-weight:normal;font-family:'Liberation Sans', sans-serif;letter-spacing:0.4px;">Search</div>
<div class="r" style="left:468.2px;top:1332.5px;width:24.1px;height:21.5px;background:#2c64f0;border-radius:4px;"></div>
<svg class="r" style="left:472.2px;top:1335.3px;" width="16" height="16" viewBox="0 0 24 24" fill="none" stroke="#ffffff" stroke-width="2.10" stroke-linecap="round" stroke-linejoin="round"><path d="M20 6 9 17l-5-5"/></svg>
<div class="t" style="left:511.0px;top:1335.5px;font-size:17.2px;color:#2f3a4d;font-weight:normal;font-family:'Liberation Sans', sans-serif;letter-spacing:1.0px;-webkit-text-stroke:0.25px #2f3a4d;">mongo-db</div>
<div class="t" style="right:1914.8px;top:1335.9px;font-size:16.7px;color:#64748b;font-weight:normal;font-family:'Liberation Sans', sans-serif;letter-spacing:0.9px;">39K</div>
<div class="r" style="left:468.2px;top:1364.8px;width:24.1px;height:21.5px;background:#2c64f0;border-radius:4px;"></div>
<svg class="r" style="left:472.2px;top:1367.6px;" width="16" height="16" viewBox="0 0 24 24" fill="none" stroke="#ffffff" stroke-width="2.10" stroke-linecap="round" stroke-linejoin="round"><path d="M20 6 9 17l-5-5"/></svg>
<div class="t" style="left:511.0px;top:1367.8px;font-size:17.2px;color:#2f3a4d;font-weight:normal;font-family:'Liberation Sans', sans-serif;letter-spacing:1.0px;-webkit-text-stroke:0.25px #2f3a4d;">news-reader</div>
<div class="t" style="right:1914.8px;top:1368.2px;font-size:16.7px;color:#64748b;font-weight:normal;font-family:'Liberation Sans', sans-serif;letter-spacing:0.9px;">36K</div>
<div class="r" style="left:845.5px;top:532.9px;width:1726.2px;height:853.7px;border:1px solid #e4e7ec;border-radius:7px;background:#fff;"></div>
<div class="t" style="left:883.3px;top:550.2px;font-size:18px;color:#64748b;font-weight:normal;font-family:'Liberation Sans', sans-serif;letter-spacing:0.75px;">timestamp</div>
<svg class="r" style="left:1091.0px;top:550.0px;" width="20" height="20" viewBox="0 0 24 24" fill="none" stroke="#6b7280" stroke-width="1.80" stroke-linecap="round" stroke-linejoin="round"><path d="M12 3v18"/><path d="m5 14 7 7 7-7"/></svg>
<div class="t" style="left:1151.4px;top:550.2px;font-size:18px;color:#64748b;font-weight:normal;font-family:'Liberation Sans', sans-serif;letter-spacing:0.7px;">instance</div>
<div class="t" style="left:1512.8px;top:550.2px;font-size:18px;color:#64748b;font-weight:normal;font-family:'Liberation Sans', sans-serif;letter-spacing:0.4px;">Log</div>
<div class="r" style="left:846.5px;top:586.0px;width:1724.2px;height:1.2px;background:#e4e6eb;"></div>
<div class="r" style="left:2567.1px;top:587.6px;width:4.1px;height:89.4px;background:#dde1ea;border-radius:2px;"></div>
<div class="r" style="left:882.5px;top:596.8px;width:6.0px;height:17.6px;background:#9aa1b1;border-radius:3px;"></div>
<div class="t" style="left:901.4px;top:595.5px;font-size:20.5px;color:#111827;font-weight:normal;font-family:'Liberation Sans', sans-serif;letter-spacing:0.6px;">Mar 03 16:00:31.155</div>
<div class="t" style="left:1151.5px;top:595.5px;font-size:20.5px;color:#111827;font-weight:normal;font-family:'Liberation Sans', sans-serif;letter-spacing:1.2px;">news-reader-995fbbc78-xlbkn</div>
<div class="t" style="left:1512.8px;top:596.9px;font-size:21px;color:#111827;font-weight:normal;font-family:'Liberation Mono', monospace;letter-spacing:0.08px;">2025/03/03 14:00:31 Received status code 200 for user wavEWFYXBp with 9 head…</div>
<div class="r" style="left:846.5px;top:624.0px;width:1720.5px;height:1.0px;background:#e8eaee;"></div>
<div class="r" style="left:882.5px;top:634.6px;width:6.0px;height:17.6px;background:#9aa1b1;border-radius:3px;"></div>
<div class="t" style="left:901.4px;top:633.2px;font-size:20.5px;color:#111827;font-weight:normal;font-family:'Liberation Sans', sans-serif;letter-spacing:0.6px;">Mar 03 16:00:31.154</div>
<div class="t" style="left:1151.5px;top:633.2px;font-size:20.5px;color:#111827;font-weight:normal;font-family:'Liberation Sans', sans-serif;letter-spacing:1.2px;">news-service-7db5c7b567-w...</div>
<div class="t" style="left:1512.8px;top:634.7px;font-size:21px;color:#111827;font-weight:normal;font-family:'Liberation Mono', monospace;letter-spacing:0.08px;">2025/03/03 14:00:31 main.go:40: [News Service] Generated 9 headlines for use…</div>
<div class="r" style="left:846.5px;top:662.0px;width:1720.5px;height:1.0px;background:#e8eaee;"></div>
<div class="r" style="left:882.5px;top:672.3px;width:6.0px;height:17.6px;background:#9aa1b1;border-radius:3px;"></div>
<div class="t" style="left:901.4px;top:671.0px;font-size:20.5px;color:#111827;font-weight:normal;font-family:'Liberation Sans', sans-serif;letter-spacing:0.6px;">Mar 03 16:00:31.132</div>
<div class="t" style="left:1151.5px;top:671.0px;font-size:20.5px;color:#111827;font-weight:normal;font-family:'Liberation Sans', sans-serif;letter-spacing:1.2px;">news-reader-995fbbc78-xlbkn</div>
<div class="t" style="left:1512.8px;top:672.5px;font-size:21px;color:#111827;font-weight:normal;font-family:'Liberation Mono', monospace;letter-spacing:0.08px;">2025/03/03 14:00:31 Received status code 200 for user YnpnBjteEC with 9 head…</div>
<div class="r" style="left:846.5px;top:699.0px;width:1724.2px;height:1.0px;background:#e8eaee;"></div>
<div class="r" style="left:882.5px;top:710.1px;width:6.0px;height:17.6px;background:#9aa1b1;border-radius:3px;"></div>
<div class="t" style="left:901.4px;top:708.8px;font-size:20.5px;color:#111827;font-weight:normal;font-family:'Liberation Sans', sans-serif;letter-spacing:0.6px;">Mar 03 16:00:31.132</div>
<div class="t" style="left:1151.5px;top:708.8px;font-size:20.5px;color:#111827;font-weight:normal;font-family:'Liberation Sans', sans-serif;letter-spacing:1.2px;">news-service-7db5c7b567-w...</div>
<div class="t" style="left:1512.8px;top:710.2px;font-size:21px;color:#111827;font-weight:normal;font-family:'Liberation Mono', monospace;letter-spacing:0.08px;">2025/03/03 14:00:31 main.go:40: [News Service] Generated 9 headlines for use…</div>
<div class="r" style="left:846.5px;top:737.0px;width:1724.2px;height:1.0px;background:#e8eaee;"></div>
<div class="r" style="left:882.5px;top:747.9px;width:6.0px;height:17.6px;background:#9aa1b1;border-radius:3px;"></div>
<div class="t" style="left:901.4px;top:746.6px;font-size:20.5px;color:#111827;font-weight:normal;font-family:'Liberation Sans', sans-serif;letter-spacing:0.6px;">Mar 03 16:00:31.105</div>
<div class="t" style="left:1151.5px;top:746.6px;font-size:20.5px;color:#111827;font-weight:normal;font-family:'Liberation Sans', sans-serif;letter-spacing:1.2px;">news-reader-995fbbc78-xlbkn</div>
<div class="t" style="left:1512.8px;top:748.0px;font-size:21px;color:#111827;font-weight:normal;font-family:'Liberation Mono', monospace;letter-spacing:0.08px;">2025/03/03 14:00:31 Received status code 200 for user IFUqbkYbkt with 10 hea…</div>
<div class="r" style="left:846.5px;top:775.0px;width:1724.2px;height:1.0px;background:#e8eaee;"></div>
<div class="r" style="left:882.5px;top:785.7px;width:6.0px;height:17.6px;background:#9aa1b1;border-radius:3px;"></div>
<div class="t" style="left:901.4px;top:784.3px;font-size:20.5px;color:#111827;font-weight:normal;font-family:'Liberation Sans', sans-serif;letter-spacing:0.6px;">Mar 03 16:00:31.105</div>
<div class="t" style="left:1151.5px;top:784.3px;font-size:20.5px;color:#111827;font-weight:normal;font-family:'Liberation Sans', sans-serif;letter-spacing:1.2px;">news-service-7db5c7b567-w...</div>
<div class="t" style="left:1512.8px;top:785.8px;font-size:21px;color:#111827;font-weight:normal;font-family:'Liberation Mono', monospace;letter-spacing:0.08px;">2025/03/03 14:00:31 main.go:40: [News Service] Generated 10 headlines for us…</div>
<div class="r" style="left:846.5px;top:813.0px;width:1724.2px;height:1.0px;background:#e8eaee;"></div>
<div class="r" style="left:882.5px;top:823.4px;width:6.0px;height:17.6px;background:#9aa1b1;border-radius:3px;"></div>
<div class="t" style="left:901.4px;top:822.1px;font-size:20.5px;color:#111827;font-weight:normal;font-family:'Liberation Sans', sans-serif;letter-spacing:0.6px;">Mar 03 16:00:31.081</div>
<div class="t" style="left:1151.5px;top:822.1px;font-size:20.5px;color:#111827;font-weight:normal;font-family:'Liberation Sans', sans-serif;letter-spacing:1.2px;">news-reader-995fbbc78-xlbkn</div>
<div class="t" style="left:1512.8px;top:823.6px;font-size:21px;color:#111827;font-weight:normal;font-family:'Liberation Mono', monospace;letter-spacing:0.08px;">2025/03/03 14:00:31 Received status code 200 for user sIkCpYFyJy with 6 head…</div>
<div class="r" style="left:846.5px;top:850.0px;width:1724.2px;height:1.0px;background:#e8eaee;"></div>
<div class="r" style="left:882.5px;top:861.2px;width:6.0px;height:17.6px;background:#9aa1b1;border-radius:3px;"></div>
<div class="t" style="left:901.4px;top:859.9px;font-size:20.5px;color:#111827;font-weight:normal;font-family:'Liberation Sans', sans-serif;letter-spacing:0.6px;">Mar 03 16:00:31.081</div>
<div class="t" style="left:1151.5px;top:859.9px;font-size:20.5px;color:#111827;font-weight:normal;font-family:'Liberation Sans', sans-serif;letter-spacing:1.2px;">news-service-7db5c7b567-w...</div>
<div class="t" style="left:1512.8px;top:861.3px;font-size:21px;color:#111827;font-weight:normal;font-family:'Liberation Mono', monospace;letter-spacing:0.08px;">2025/03/03 14:00:31 main.go:40: [News Service] Generated 6 headlines for use…</div>
<div class="r" style="left:846.5px;top:888.0px;width:1724.2px;height:1.0px;background:#e8eaee;"></div>
<div class="r" style="left:882.5px;top:899.0px;width:6.0px;height:17.6px;background:#9aa1b1;border-radius:3px;"></div>
<div class="t" style="left:901.4px;top:897.6px;font-size:20.5px;color:#111827;font-weight:normal;font-family:'Liberation Sans', sans-serif;letter-spacing:0.6px;">Mar 03 16:00:31.055</div>
<div class="t" style="left:1151.5px;top:897.6px;font-size:20.5px;color:#111827;font-weight:normal;font-family:'Liberation Sans', sans-serif;letter-spacing:1.2px;">news-reader-995fbbc78-xlbkn</div>
<div class="t" style="left:1512.8px;top:899.1px;font-size:21px;color:#111827;font-weight:normal;font-family:'Liberation Mono', monospace;letter-spacing:0.08px;">2025/03/03 14:00:31 Received status code 200 for user QiRkTACGJu with 4 head…</div>
<div class="r" style="left:846.5px;top:926.0px;width:1724.2px;height:1.0px;background:#e8eaee;"></div>
<div class="r" style="left:882.5px;top:936.7px;width:6.0px;height:17.6px;background:#9aa1b1;border-radius:3px;"></div>
<div class="t" style="left:901.4px;top:935.4px;font-size:20.5px;color:#111827;font-weight:normal;font-family:'Liberation Sans', sans-serif;letter-spacing:0.6px;">Mar 03 16:00:31.055</div>
<div class="t" style="left:1151.5px;top:935.4px;font-size:20.5px;color:#111827;font-weight:normal;font-family:'Liberation Sans', sans-serif;letter-spacing:1.2px;">news-service-7db5c7b567-w...</div>
<div class="t" style="left:1512.8px;top:936.9px;font-size:21px;color:#111827;font-weight:normal;font-family:'Liberation Mono', monospace;letter-spacing:0.08px;">2025/03/03 14:00:31 main.go:40: [News Service] Generated 4 headlines for use…</div>
<div class="r" style="left:846.5px;top:964.0px;width:1724.2px;height:1.0px;background:#e8eaee;"></div>
<div class="r" style="left:882.5px;top:974.5px;width:6.0px;height:17.6px;background:#c23a4f;border-radius:3px;"></div>
<div class="t" style="left:901.4px;top:973.2px;font-size:20.5px;color:#111827;font-weight:normal;font-family:'Liberation Sans', sans-serif;letter-spacing:0.6px;">Mar 03 16:00:31.042</div>
<div class="t" style="left:1151.5px;top:973.2px;font-size:20.5px;color:#111827;font-weight:normal;font-family:'Liberation Sans', sans-serif;letter-spacing:1.2px;">usersmanagerservice-6f48dd...</div>
<div class="t" style="left:1512.8px;top:974.6px;font-size:21px;color:#111827;font-weight:normal;font-family:'Liberation Mono', monospace;letter-spacing:0.08px;">insertUserToTableWrongDataTypes failed with error: Error 1064 (42000): You h…</div>
<div class="r" style="left:846.5px;top:1002.0px;width:1724.2px;height:1.0px;background:#e8eaee;"></div>
<div class="r" style="left:882.5px;top:1012.3px;width:6.0px;height:17.6px;background:#c23a4f;border-radius:3px;"></div>
<div class="t" style="left:901.4px;top:1010.9px;font-size:20.5px;color:#111827;font-weight:normal;font-family:'Liberation Sans', sans-serif;letter-spacing:0.6px;">Mar 03 16:00:31.042</div>
<div class="t" style="left:1151.5px;top:1010.9px;font-size:20.5px;color:#111827;font-weight:normal;font-family:'Liberation Sans', sans-serif;letter-spacing:1.2px;">usersmanagerservice-6f48dd...</div>
<div class="t" style="left:1512.8px;top:1012.4px;font-size:21px;color:#111827;font-weight:normal;font-family:'Liberation Mono', monospace;letter-spacing:0.08px;">insertUserToTable failed!: Error 1064 (42000): You have an error in your SQL…</div>
<div class="r" style="left:846.5px;top:1039.0px;width:1724.2px;height:1.0px;background:#e8eaee;"></div>
<div class="r" style="left:882.5px;top:1050.0px;width:6.0px;height:17.6px;background:#c23a4f;border-radius:3px;"></div>
<div class="t" style="left:901.4px;top:1048.7px;font-size:20.5px;color:#111827;font-weight:normal;font-family:'Liberation Sans', sans-serif;letter-spacing:0.6px;">Mar 03 16:00:31.041</div>
<div class="t" style="left:1151.5px;top:1048.7px;font-size:20.5px;color:#111827;font-weight:normal;font-family:'Liberation Sans', sans-serif;letter-spacing:1.2px;">usersmanagerservice-6f48dd...</div>
<div class="t" style="left:1512.8px;top:1050.2px;font-size:21px;color:#111827;font-weight:normal;font-family:'Liberation Mono', monospace;letter-spacing:0.08px;">insertUserToTable failed with error: Error 1146 (42S02): Table &#x27;mysql.non_ex…</div>
<div class="r" style="left:846.5px;top:1077.0px;width:1724.2px;height:1.0px;background:#e8eaee;"></div>
<div class="r" style="left:882.5px;top:1087.8px;width:6.0px;height:17.6px;background:#c23a4f;border-radius:3px;"></div>
<div class="t" style="left:901.4px;top:1086.5px;font-size:20.5px;color:#111827;font-weight:normal;font-family:'Liberation Sans', sans-serif;letter-spacing:0.6px;">Mar 03 16:00:31.041</div>
<div class="t" style="left:1151.5px;top:1086.5px;font-size:20.5px;color:#111827;font-weight:normal;font-family:'Liberation Sans', sans-serif;letter-spacing:1.2px;">usersmanagerservice-6f48dd...</div>
<div class="t" style="left:1512.8px;top:1088.0px;font-size:21px;color:#111827;font-weight:normal;font-family:'Liberation Mono', monospace;letter-spacing:0.08px;">insertUserToTable failed!: Error 1146 (42S02): Table &#x27;mysql.non_existing_tab…</div>
<div class="r" style="left:846.5px;top:1115.0px;width:1724.2px;height:1.0px;background:#e8eaee;"></div>
<div class="r" style="left:882.5px;top:1125.6px;width:6.0px;height:17.6px;background:#8189f2;border-radius:3px;"></div>
<div class="t" style="left:901.4px;top:1124.3px;font-size:20.5px;color:#111827;font-weight:normal;font-family:'Liberation Sans', sans-serif;letter-spacing:0.6px;">Mar 03 16:00:31.040</div>
<div class="t" style="left:1151.5px;top:1124.3px;font-size:20.5px;color:#111827;font-weight:normal;font-family:'Liberation Sans', sans-serif;letter-spacing:1.2px;">usersmanagerservice-6f48dd...</div>
<div class="t" style="left:1512.8px;top:1125.7px;font-size:21px;color:#111827;font-weight:normal;font-family:'Liberation Mono', monospace;letter-spacing:0.08px;">insertUserToTable user: %q into table: %qgxpPSfNlusers</div>
<div class="r" style="left:846.5px;top:1153.0px;width:1724.2px;height:1.0px;background:#e8eaee;"></div>
<div class="r" style="left:882.5px;top:1163.4px;width:6.0px;height:17.6px;background:#8189f2;border-radius:3px;"></div>
<div class="t" style="left:901.4px;top:1162.0px;font-size:20.5px;color:#111827;font-weight:normal;font-family:'Liberation Sans', sans-serif;letter-spacing:0.6px;">Mar 03 16:00:31.035</div>
<div class="t" style="left:1151.5px;top:1162.0px;font-size:20.5px;color:#111827;font-weight:normal;font-family:'Liberation Sans', sans-serif;letter-spacing:1.2px;">usersmanagerservice-6f48dd...</div>
<div class="t" style="left:1512.8px;top:1163.5px;font-size:21px;color:#111827;font-weight:normal;font-family:'Liberation Mono', monospace;letter-spacing:0.08px;">driver: mysql</div>
<div class="r" style="left:846.5px;top:1190.0px;width:1724.2px;height:1.0px;background:#e8eaee;"></div>
<div class="r" style="left:882.5px;top:1201.1px;width:6.0px;height:17.6px;background:#c23a4f;border-radius:3px;"></div>
<div class="t" style="left:901.4px;top:1199.8px;font-size:20.5px;color:#111827;font-weight:normal;font-family:'Liberation Sans', sans-serif;letter-spacing:0.6px;">Mar 03 16:00:31.035</div>
<div class="t" style="left:1151.5px;top:1199.8px;font-size:20.5px;color:#111827;font-weight:normal;font-family:'Liberation Sans', sans-serif;letter-spacing:1.2px;">usersmanagerservice-6f48dd...</div>
<div class="t" style="left:1512.8px;top:1201.3px;font-size:21px;color:#111827;font-weight:normal;font-family:'Liberation Mono', monospace;letter-spacing:0.08px;">insertUserToTableWrongDataTypes failed with error: pq: relation &quot;non_existin…</div>
<div class="r" style="left:846.5px;top:1228.0px;width:1724.2px;height:1.0px;background:#e8eaee;"></div>
<div class="r" style="left:882.5px;top:1238.9px;width:6.0px;height:17.6px;background:#c23a4f;border-radius:3px;"></div>
<div class="t" style="left:901.4px;top:1237.6px;font-size:20.5px;color:#111827;font-weight:normal;font-family:'Liberation Sans', sans-serif;letter-spacing:0.6px;">Mar 03 16:00:31.035</div>
<div class="t" style="left:1151.5px;top:1237.6px;font-size:20.5px;color:#111827;font-weight:normal;font-family:'Liberation Sans', sans-serif;letter-spacing:1.2px;">usersmanagerservice-6f48dd...</div>
<div class="t" style="left:1512.8px;top:1239.0px;font-size:21px;color:#111827;font-weight:normal;font-family:'Liberation Mono', monospace;letter-spacing:0.08px;">insertUserToTable failed!: pq: relation &quot;non_existing_table_name&quot; does not e…</div>
<div class="r" style="left:846.5px;top:1266.0px;width:1724.2px;height:1.0px;background:#e8eaee;"></div>
<div class="r" style="left:882.5px;top:1276.7px;width:6.0px;height:17.6px;background:#c23a4f;border-radius:3px;"></div>
<div class="t" style="left:901.4px;top:1275.3px;font-size:20.5px;color:#111827;font-weight:normal;font-family:'Liberation Sans', sans-serif;letter-spacing:0.6px;">Mar 03 16:00:31.034</div>
<div class="t" style="left:1151.5px;top:1275.3px;font-size:20.5px;color:#111827;font-weight:normal;font-family:'Liberation Sans', sans-serif;letter-spacing:1.2px;">usersmanagerservice-6f48dd...</div>
<div class="t" style="left:1512.8px;top:1276.8px;font-size:21px;color:#111827;font-weight:normal;font-family:'Liberation Mono', monospace;letter-spacing:0.08px;">insertUserToTable failed with error: pq: relation &quot;non_existing_table_name&quot; …</div>
<div class="r" style="left:846.5px;top:1304.0px;width:1724.2px;height:1.0px;background:#e8eaee;"></div>
<div class="r" style="left:882.5px;top:1314.4px;width:6.0px;height:17.6px;background:#c23a4f;border-radius:3px;"></div>
<div class="t" style="left:901.4px;top:1313.1px;font-size:20.5px;color:#111827;font-weight:normal;font-family:'Liberation Sans', sans-serif;letter-spacing:0.6px;">Mar 03 16:00:31.034</div>
<div class="t" style="left:1151.5px;top:1313.1px;font-size:20.5px;color:#111827;font-weight:normal;font-family:'Liberation Sans', sans-serif;letter-spacing:1.2px;">usersmanagerservice-6f48dd...</div>
<div class="t" style="left:1512.8px;top:1314.6px;font-size:21px;color:#111827;font-weight:normal;font-family:'Liberation Mono', monospace;letter-spacing:0.08px;">insertUserToTable failed!: pq: relation &quot;non_existing_table_name&quot; does not e…</div>
<div class="r" style="left:846.5px;top:1341.0px;width:1724.2px;height:1.0px;background:#e8eaee;"></div>
<div class="r" style="left:882.5px;top:1352.2px;width:6.0px;height:17.6px;background:#9aa1b1;border-radius:3px;"></div>
<div class="t" style="left:901.4px;top:1350.9px;font-size:20.5px;color:#111827;font-weight:normal;font-family:'Liberation Sans', sans-serif;letter-spacing:0.6px;">Mar 03 16:00:31.032</div>
<div class="t" style="left:1151.5px;top:1350.9px;font-size:20.5px;color:#111827;font-weight:normal;font-family:'Liberation Sans', sans-serif;letter-spacing:1.2px;">news-reader-995fbbc78-xlbkn</div>
<div class="t" style="left:1512.8px;top:1352.3px;font-size:21px;color:#111827;font-weight:normal;font-family:'Liberation Mono', monospace;letter-spacing:0.08px;">2025/03/03 14:00:31 Received status code 200 for user CnJnIlIsem with 10 hea…</div>
<div class="r" style="left:846.5px;top:1379.0px;width:1724.2px;height:1.0px;background:#e8eaee;"></div>
</div></div>
</body></html>
